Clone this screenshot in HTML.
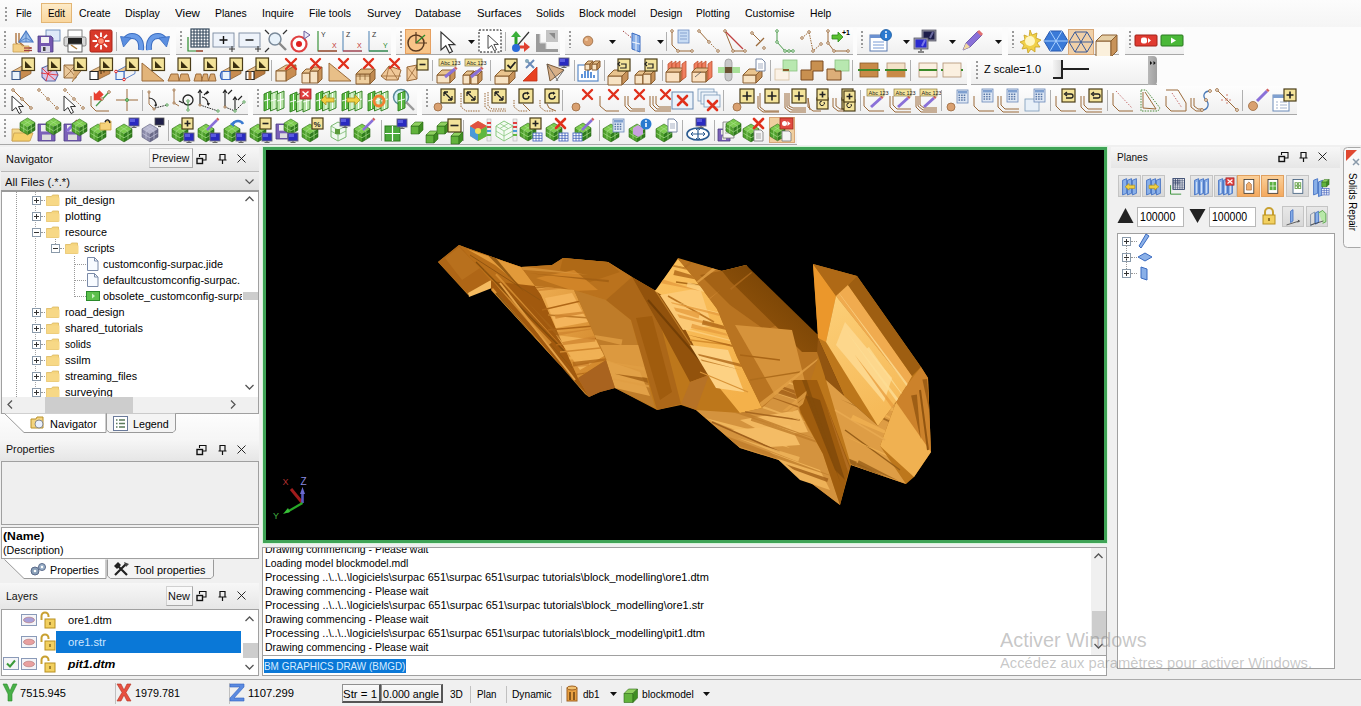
<!DOCTYPE html><html><head><meta charset="utf-8"><style>
*{margin:0;padding:0;box-sizing:border-box}
html,body{width:1361px;height:706px;overflow:hidden;background:#fcfcfc;font-family:"Liberation Sans",sans-serif;font-size:11px;color:#000}
.a{position:absolute}
.t{position:absolute;white-space:nowrap;line-height:14px}
.tb{position:absolute;background:linear-gradient(#fdfdfd,#f1f1f1);border-bottom:1px solid #a9a9a9}
.grip{position:absolute;width:2px;background:repeating-linear-gradient(#9a9a9a 0 2px,transparent 2px 4px)}
.sep{position:absolute;width:1px;background:#b8b8b8}
.hdr{position:absolute;background:linear-gradient(#fafafa,#e9e9e9)}
.box{position:absolute;border:1px solid #a0a0a0;background:#fff}
svg{position:absolute;overflow:visible}
</style></head><body>
<div class="a" style="left:0px;top:0px;width:1361px;height:27px;background:linear-gradient(#fcfcfc,#f5f5f5)"></div>
<div class="grip" style="left:5px;top:7px;height:14px"></div>
<div class="a" style="left:41px;top:3px;width:31px;height:20px;background:linear-gradient(#fdebc8,#f9d69e);border:1px solid #e3b675"></div>
<div class="t" style="left:16px;top:6px;font-size:11.5px;transform:scaleX(0.8472);transform-origin:0 0">File</div>
<div class="t" style="left:48px;top:6px;font-size:11.5px;transform:scaleX(0.8579);transform-origin:0 0">Edit</div>
<div class="t" style="left:79px;top:6px;font-size:11.5px;transform:scaleX(0.9126);transform-origin:0 0">Create</div>
<div class="t" style="left:125px;top:6px;font-size:11.5px;transform:scaleX(0.9255);transform-origin:0 0">Display</div>
<div class="t" style="left:175px;top:6px;font-size:11.5px;transform:scaleX(1.0113);transform-origin:0 0">View</div>
<div class="t" style="left:215px;top:6px;font-size:11.5px;transform:scaleX(0.9043);transform-origin:0 0">Planes</div>
<div class="t" style="left:262px;top:6px;font-size:11.5px;transform:scaleX(0.9043);transform-origin:0 0">Inquire</div>
<div class="t" style="left:309px;top:6px;font-size:11.5px;transform:scaleX(0.9127);transform-origin:0 0">File tools</div>
<div class="t" style="left:367px;top:6px;font-size:11.5px;transform:scaleX(0.9499);transform-origin:0 0">Survey</div>
<div class="t" style="left:415px;top:6px;font-size:11.5px;transform:scaleX(0.9344);transform-origin:0 0">Database</div>
<div class="t" style="left:476.5px;top:6px;font-size:11.5px;transform:scaleX(0.9827);transform-origin:0 0">Surfaces</div>
<div class="t" style="left:535.6px;top:6px;font-size:11.5px;transform:scaleX(0.9067);transform-origin:0 0">Solids</div>
<div class="t" style="left:578.5px;top:6px;font-size:11.5px;transform:scaleX(0.9068);transform-origin:0 0">Block model</div>
<div class="t" style="left:649.5px;top:6px;font-size:11.5px;transform:scaleX(0.9051);transform-origin:0 0">Design</div>
<div class="t" style="left:696px;top:6px;font-size:11.5px;transform:scaleX(0.8812);transform-origin:0 0">Plotting</div>
<div class="t" style="left:745px;top:6px;font-size:11.5px;transform:scaleX(0.9149);transform-origin:0 0">Customise</div>
<div class="t" style="left:810px;top:6px;font-size:11.5px;transform:scaleX(0.9005);transform-origin:0 0">Help</div>
<svg width="0" height="0" style="position:absolute"><defs><linearGradient id="g_hl" x1="0" y1="0" x2="0" y2="1"><stop offset="0" stop-color="#fcdcb0"/><stop offset="1" stop-color="#f6b86c"/></linearGradient></defs></svg>
<div class="a" style="left:0px;top:28px;width:170px;height:27px;background:linear-gradient(#fefefe,#f0f0f0);border-bottom:1px solid #a8a8a8"></div>
<div class="grip" style="left:4px;top:31px;height:17px"></div>
<div class="a" style="left:176px;top:28px;width:215px;height:27px;background:linear-gradient(#fefefe,#f0f0f0);border-bottom:1px solid #a8a8a8"></div>
<div class="grip" style="left:180px;top:31px;height:17px"></div>
<div class="a" style="left:396px;top:28px;width:164px;height:27px;background:linear-gradient(#fefefe,#f0f0f0);border-bottom:1px solid #a8a8a8"></div>
<div class="grip" style="left:400px;top:31px;height:17px"></div>
<div class="a" style="left:565px;top:28px;width:288px;height:27px;background:linear-gradient(#fefefe,#f0f0f0);border-bottom:1px solid #a8a8a8"></div>
<div class="grip" style="left:569px;top:31px;height:17px"></div>
<div class="a" style="left:857px;top:28px;width:145px;height:27px;background:linear-gradient(#fefefe,#f0f0f0);border-bottom:1px solid #a8a8a8"></div>
<div class="grip" style="left:861px;top:31px;height:17px"></div>
<div class="a" style="left:1008px;top:28px;width:111px;height:27px;background:linear-gradient(#fefefe,#f0f0f0);border-bottom:1px solid #a8a8a8"></div>
<div class="grip" style="left:1012px;top:31px;height:17px"></div>
<div class="a" style="left:1125px;top:28px;width:59px;height:27px;background:linear-gradient(#fefefe,#f0f0f0);border-bottom:1px solid #a8a8a8"></div>
<div class="grip" style="left:1129px;top:31px;height:17px"></div>
<svg style="left:11px;top:29px" width="24" height="24" viewBox="0 0 24 24"><path d="M5 4 L5 14 L11 19 L20 19" fill="none" stroke="#a86a30" stroke-width="1.3"/><path d="M8 4 L8 13 L13 17" fill="none" stroke="#a86a30" stroke-width="1.3"/><path d="M2 15h7l2 2h7v6H2z" fill="#f3cf86" stroke="#c8a050" stroke-width=".8"/><path d="M15 2l7 11h-14z" fill="#9cc0ec" stroke="#4a7ac4" stroke-width="1.2"/><path d="M15 2v11M8 13l7-4l7 4" stroke="#4a7ac4" stroke-width=".8" fill="none"/><path d="M13 19 L21 19" fill="none" stroke="#a04040" stroke-width="1.3"/><path d="M13 21.5 L21 21.5" fill="none" stroke="#a04040" stroke-width="1.3"/></svg>
<svg style="left:37px;top:29px" width="24" height="24" viewBox="0 0 24 24"><rect x="9" y="1" width="14" height="11" fill="#dfeaf8" stroke="#6a8ab8" stroke-width=".9"/><path d="M1 7h13l2 2v14H1z" fill="#7458b0" stroke="#4a3a80" stroke-width=".8"/><rect x="4" y="8" width="8" height="6" fill="#f2f2f2"/><rect x="4" y="17" width="9" height="6" fill="#d8d8e8"/><rect x="6" y="18" width="2.5" height="4" fill="#444"/></svg>
<svg style="left:63px;top:29px" width="24" height="24" viewBox="0 0 24 24"><rect x="5" y="1" width="14" height="8" fill="#fff" stroke="#777" stroke-width=".9"/><rect x="1" y="8" width="22" height="9" rx="1.5" fill="#d8d8d8" stroke="#777" stroke-width=".9"/><rect x="5" y="9" width="14" height="7" fill="#222"/><rect x="5" y="15" width="14" height="8" fill="#fff" stroke="#555" stroke-width=".9"/><path d="M8 16l6 4" stroke="#b08040" stroke-width="1.5"/></svg>
<svg style="left:89px;top:29px" width="24" height="24" viewBox="0 0 24 24"><rect x="1" y="1" width="22" height="22" rx="1.5" fill="#d8392a" stroke="#a82418"/><circle cx="12" cy="12" r="2.8" fill="#ff8a70"/><path d="M16.0 12.0L20.5 12.0" stroke="#fff" stroke-width="1.8"/><path d="M14.829553076668798 14.827300724421464L18.0128002879212 18.00801403939561" stroke="#fff" stroke-width="1.8"/><path d="M12.003185306842933 15.999998731727338L12.006768777041232 20.499997304920594" stroke="#fff" stroke-width="1.8"/><path d="M9.17495342071998 14.83180363459373L5.996776019029956 18.017582723511673" stroke="#fff" stroke-width="1.8"/><path d="M8.000005073089842 12.006370611665947L3.5000107803159146 12.013537549790138" stroke="#fff" stroke-width="1.8"/><path d="M9.165947603230908 9.177209357326094L5.977638656865682 6.001569884317948" stroke="#fff" stroke-width="1.8"/><path d="M11.990444087550873 8.000011414449128L11.979693686045607 3.500024255704398" stroke="#fff" stroke-width="1.8"/><path d="M14.820532916033692 9.163700638231132L17.993632446571596 5.972863856241157" stroke="#fff" stroke-width="1.8"/></svg>
<svg style="left:120px;top:29px" width="24" height="24" viewBox="0 0 24 24"><path d="M21 21c1-9-3-14-9-14c-3 0-5 1.5-6.5 3.5" stroke="#3a6cc0" stroke-width="6" fill="none"/><path d="M21 21c1-9-3-14-9-14c-3 0-5 1.5-6.5 3.5" stroke="#6a9ce8" stroke-width="4" fill="none"/><path d="M0.5 7.5l10.5 1.5l-7.5 9z" fill="#5a8ee0" stroke="#3a6cc0" stroke-width=".8"/></svg>
<svg style="left:146px;top:29px" width="24" height="24" viewBox="0 0 24 24"><g transform="translate(24 0) scale(-1 1)"><path d="M21 21c1-9-3-14-9-14c-3 0-5 1.5-6.5 3.5" stroke="#3a6cc0" stroke-width="6" fill="none"/><path d="M21 21c1-9-3-14-9-14c-3 0-5 1.5-6.5 3.5" stroke="#6a9ce8" stroke-width="4" fill="none"/><path d="M0.5 7.5l10.5 1.5l-7.5 9z" fill="#5a8ee0" stroke="#3a6cc0" stroke-width=".8"/></g></svg>
<svg style="left:186px;top:29px" width="24" height="24" viewBox="0 0 24 24"><rect x="5" y="0" width="18" height="18" fill="#fff" stroke="#34485c" stroke-width="1.2"/><path d="M8 0v18M5 3h18" stroke="#34485c" stroke-width="1.1"/><path d="M11 0v18M5 6h18" stroke="#34485c" stroke-width="1.1"/><path d="M14 0v18M5 9h18" stroke="#34485c" stroke-width="1.1"/><path d="M17 0v18M5 12h18" stroke="#34485c" stroke-width="1.1"/><path d="M20 0v18M5 15h18" stroke="#34485c" stroke-width="1.1"/><path d="M2 8 L2 22 L17 22" fill="none" stroke="#2a8a2a" stroke-width="1.2"/><path d="M10 22 L17 22" fill="none" stroke="#c03030" stroke-width="1.2"/></svg>
<svg style="left:212px;top:29px" width="24" height="24" viewBox="0 0 24 24"><rect x="1" y="4" width="21" height="14" fill="#eef3fa" stroke="#7a8aa0" stroke-width=".9"/><path d="M11.5 7v8M7.5 11h8" stroke="#111" stroke-width="1.4"/><path d="M20 17v6M17 20h6" stroke="#333" stroke-width="1"/></svg>
<svg style="left:238px;top:29px" width="24" height="24" viewBox="0 0 24 24"><rect x="1" y="4" width="21" height="14" fill="#eef3fa" stroke="#7a8aa0" stroke-width=".9"/><path d="M7.5 11h8" stroke="#111" stroke-width="1.4"/><path d="M20 17v6M17 20h6" stroke="#333" stroke-width="1"/></svg>
<svg style="left:264px;top:29px" width="24" height="24" viewBox="0 0 24 24"><circle cx="11" cy="10" r="6" fill="#e8f2fa" stroke="#7a8a9a" stroke-width="1.5"/><path d="M15 14l7 7" stroke="#888" stroke-width="2.4"/><path d="M1 1l4 4M23 1l-4 4M1 23l4-4" stroke="#333" stroke-width="1.2"/></svg>
<svg style="left:289px;top:29px" width="24" height="24" viewBox="0 0 24 24"><circle cx="10" cy="15" r="7.5" fill="#fff" stroke="#e04040" stroke-width="2.2"/><circle cx="10" cy="15" r="3" fill="#e02020"/><path d="M15 2l6 4l-6 4z" fill="#e8e8f8" stroke="#6a5a9a" stroke-width="1"/></svg>
<svg style="left:315px;top:29px" width="24" height="24" viewBox="0 0 24 24"><path d="M3 2 L3 22 L22 22" fill="none" stroke="#2a8a2a" stroke-width="1.1"/><text x="6" y="8" font-size="7" fill="#333" font-family="Liberation Sans">Y</text><text x="17" y="19" font-size="7" fill="#c03030" font-family="Liberation Sans">X</text><path d="M3 22 L22 22" fill="none" stroke="#c03030" stroke-width="1.1"/></svg>
<svg style="left:340px;top:29px" width="24" height="24" viewBox="0 0 24 24"><path d="M3 2 L3 22 L22 22" fill="none" stroke="#5a8ab8" stroke-width="1.1"/><text x="6" y="8" font-size="7" fill="#333" font-family="Liberation Sans">Z</text><text x="17" y="19" font-size="7" fill="#c03030" font-family="Liberation Sans">X</text><path d="M3 22 L22 22" fill="none" stroke="#c03030" stroke-width="1.1"/></svg>
<svg style="left:366px;top:29px" width="24" height="24" viewBox="0 0 24 24"><path d="M3 2 L3 22 L22 22" fill="none" stroke="#5a8ab8" stroke-width="1.1"/><text x="6" y="8" font-size="7" fill="#333" font-family="Liberation Sans">Z</text><text x="17" y="19" font-size="7" fill="#2a8a2a" font-family="Liberation Sans">Y</text><path d="M3 22 L22 22" fill="none" stroke="#2a8a2a" stroke-width="1.1"/></svg>
<svg style="left:437px;top:29px" width="24" height="24" viewBox="0 0 24 24"><path transform="translate(4 3) scale(1.2)" d="M0 0v15l4 -3.5l3 6l2.5 -1.2l-3 -5.8h5z" fill="#fff" stroke="#333" stroke-width="1"/></svg>
<svg style="left:478px;top:29px" width="24" height="24" viewBox="0 0 24 24"><rect x="1" y="1" width="22" height="22" fill="#fff" stroke="#111" stroke-dasharray="2 1.5"/><path transform="translate(10 6) scale(0.9)" d="M0 0v15l4 -3.5l3 6l2.5 -1.2l-3 -5.8h5z" fill="#fff" stroke="#333" stroke-width="1"/></svg>
<svg style="left:508px;top:29px" width="24" height="24" viewBox="0 0 24 24"><path d="M8 20V5" stroke="#2aa02a" stroke-width="3"/><path d="M3 8l5-6l5 6z" fill="#3ab03a"/><path d="M9 18h9" stroke="#e04030" stroke-width="3"/><path d="M16 13l6 5l-6 5z" fill="#e04030"/><path d="M9 17l12-14" stroke="#333" stroke-width="1.2"/><circle cx="8" cy="19" r="4" fill="#2a6ad8"/></svg>
<svg style="left:535px;top:29px" width="24" height="24" viewBox="0 0 24 24"><rect x="11" y="1" width="12" height="12" fill="#c4c4c4"/><path d="M14 4h6v6z" fill="#8a8a8a"/><path d="M1 5h4v9h6v6h12v3H1z" fill="#9a9a9a"/><path d="M5 5v9h6v6" fill="none" stroke="#cfcfcf" stroke-width="1"/></svg>
<svg style="left:578px;top:29px" width="24" height="24" viewBox="0 0 24 24"><circle cx="10" cy="12" r="4.8" fill="#d9a070" stroke="#9a6a40" stroke-width=".8"/><circle cx="8.5" cy="10.5" r="1.5" fill="#f0c8a0"/></svg>
<svg style="left:622px;top:29px" width="24" height="24" viewBox="0 0 24 24"><path d="M1 2l10 8" stroke="#a04040" stroke-dasharray="1.5 1.5" stroke-width="1"/><path d="M10 4l8 3v16l-8-3z" fill="#8ab0e8" stroke="#3a6ac0" stroke-width="1"/><path d="M14 6v16M10 13l8 2" stroke="#fff" stroke-width=".9"/></svg>
<svg style="left:670px;top:29px" width="24" height="24" viewBox="0 0 24 24"><path d="M2 2 L2 16 L8 22 L22 22" fill="none" stroke="#9b6a3a" stroke-width="1.0"/><circle cx="2" cy="2" r="1.3" fill="#fff" stroke="#9b6a3a" stroke-width=".9"/><circle cx="8" cy="22" r="1.3" fill="#fff" stroke="#9b6a3a" stroke-width=".9"/><circle cx="22" cy="22" r="1.3" fill="#fff" stroke="#9b6a3a" stroke-width=".9"/><rect x="8" y="1" width="11" height="13" fill="#c8dcf4" stroke="#6a8ac0" stroke-width=".8"/><path d="M10 4h7M10 7h7M10 10h7" stroke="#6a8ac0" stroke-width=".7"/></svg>
<svg style="left:697px;top:29px" width="24" height="24" viewBox="0 0 24 24"><path d="M2 2 L12 13" fill="none" stroke="#9b6a3a" stroke-width="1.0"/><path d="M12 13 L21 22" fill="none" stroke="#9b6a3a" stroke-width="1" stroke-dasharray="1.5 1.5"/><circle cx="2" cy="2" r="1.3" fill="#fff" stroke="#9b6a3a" stroke-width=".9"/><circle cx="12" cy="13" r="1.3" fill="#fff" stroke="#9b6a3a" stroke-width=".9"/><circle cx="21" cy="22" r="1.3" fill="#fff" stroke="#9b6a3a" stroke-width=".9"/></svg>
<svg style="left:723px;top:29px" width="24" height="24" viewBox="0 0 24 24"><path d="M2 2 L10 22 L22 22" fill="none" stroke="#9b6a3a" stroke-width="1.0"/><path d="M2 2 L20 20" fill="none" stroke="#c04040" stroke-width="1.2"/><circle cx="2" cy="2" r="1.3" fill="#fff" stroke="#9b6a3a" stroke-width=".9"/><circle cx="10" cy="22" r="1.3" fill="#fff" stroke="#9b6a3a" stroke-width=".9"/><circle cx="22" cy="22" r="1.3" fill="#fff" stroke="#9b6a3a" stroke-width=".9"/></svg>
<svg style="left:750px;top:29px" width="24" height="24" viewBox="0 0 24 24"><path d="M2 4 L10 12" fill="none" stroke="#9b6a3a" stroke-width="1.0"/><path d="M6 17 L14 9" fill="none" stroke="#9b6a3a" stroke-width="1.3"/><circle cx="2" cy="4" r="1.3" fill="#fff" stroke="#9b6a3a" stroke-width=".9"/><circle cx="14" cy="19" r="1.3" fill="#fff" stroke="#9b6a3a" stroke-width=".9"/></svg>
<svg style="left:773px;top:29px" width="24" height="24" viewBox="0 0 24 24"><path d="M4 2 L4 13 L12 22 L20 22" fill="none" stroke="#4a9a4a" stroke-width="1.0"/><circle cx="4" cy="2" r="1.3" fill="#fff" stroke="#4a9a4a" stroke-width=".9"/><circle cx="4" cy="13" r="1.3" fill="#fff" stroke="#4a9a4a" stroke-width=".9"/><circle cx="12" cy="22" r="1.3" fill="#fff" stroke="#4a9a4a" stroke-width=".9"/><circle cx="16" cy="22" r="1.3" fill="#fff" stroke="#4a9a4a" stroke-width=".9"/><circle cx="20" cy="22" r="1.3" fill="#fff" stroke="#4a9a4a" stroke-width=".9"/></svg>
<svg style="left:800px;top:29px" width="24" height="24" viewBox="0 0 24 24"><path d="M2 9 L9 3 L13 22 L21 15" fill="none" stroke="#9b6a3a" stroke-width="1" stroke-dasharray="1.5 1"/><circle cx="2" cy="9" r="1.3" fill="#fff" stroke="#9b6a3a" stroke-width=".9"/><circle cx="9" cy="3" r="1.3" fill="#fff" stroke="#9b6a3a" stroke-width=".9"/><circle cx="13" cy="22" r="1.3" fill="#fff" stroke="#9b6a3a" stroke-width=".9"/><circle cx="21" cy="15" r="1.3" fill="#fff" stroke="#9b6a3a" stroke-width=".9"/></svg>
<svg style="left:826px;top:29px" width="24" height="24" viewBox="0 0 24 24"><path d="M2 2 L2 14 L8 22 L22 22" fill="none" stroke="#9b6a3a" stroke-width="1.0"/><circle cx="2" cy="2" r="1.3" fill="#fff" stroke="#9b6a3a" stroke-width=".9"/><circle cx="2" cy="14" r="1.3" fill="#fff" stroke="#9b6a3a" stroke-width=".9"/><circle cx="8" cy="22" r="1.3" fill="#fff" stroke="#9b6a3a" stroke-width=".9"/><circle cx="22" cy="22" r="1.3" fill="#fff" stroke="#9b6a3a" stroke-width=".9"/><path d="M6 6h6v-3l5 5l-5 5v-3H6z" fill="#5ac030" stroke="#2a8a1a" stroke-width=".8"/><text x="16" y="6" font-size="7" font-weight="bold" font-family="Liberation Sans">+1</text></svg>
<svg style="left:868px;top:29px" width="24" height="24" viewBox="0 0 24 24"><rect x="2" y="6" width="17" height="16" fill="#fff" stroke="#5a7ab0" stroke-width="1"/><rect x="2" y="6" width="17" height="3" fill="#6a90d0"/><path d="M5 13h11M5 16h11M5 19h11" stroke="#6a90d0" stroke-width=".9"/><circle cx="18" cy="6" r="5.5" fill="#2a7ad0" stroke="#1a5aa0" stroke-width=".8"/><path d="M18 5v4" stroke="#fff" stroke-width="1.6"/><circle cx="18" cy="3" r=".9" fill="#fff"/></svg>
<svg style="left:913px;top:29px" width="24" height="24" viewBox="0 0 24 24"><rect x="9" y="1" width="14" height="11" fill="#8a8a9a" stroke="#5a5a6a" stroke-width=".8"/><rect x="10.5" y="2.5" width="11" height="8" fill="#1e1e4a"/><path d="M20 3l-3 6" stroke="#6a6aa0" stroke-width="2"/><rect x="1" y="9" width="14" height="11" fill="#9a9aaa" stroke="#5a5a6a" stroke-width=".8"/><rect x="2.5" y="10.5" width="11" height="8" fill="#2a2ad0"/><path d="M12 11l-3 6" stroke="#7a7ae8" stroke-width="2"/><path d="M8 20v2M5 23h6" stroke="#666" stroke-width="1.5"/></svg>
<svg style="left:960px;top:29px" width="24" height="24" viewBox="0 0 24 24"><path d="M3 21l3-7l12-12l4 4l-12 12z" fill="#8a70d8" stroke="#5a48a0" stroke-width=".8"/><path d="M18 2l4 4" stroke="#e07070" stroke-width="3"/><path d="M3 21l3-7l4 4z" fill="#f0d8a0"/></svg>
<svg style="left:1018px;top:29px" width="24" height="24" viewBox="0 0 24 24"><path d="M12 1l2 5l5-2l-1 5l5 2l-4 3l3 4l-5 0l0 5l-4-3l-3 4l-1-5l-5 1l2-4l-4-3l5-2l-1-5l5 2z" fill="#f0d048" stroke="#c8a020" stroke-width=".8"/><circle cx="12" cy="12" r="5" fill="#fff6c0"/></svg>
<svg style="left:1044px;top:29px" width="24" height="24" viewBox="0 0 24 24"><path d="M6 2h12l6 10l-6 10H6L0 12z" fill="#3a7ad8" stroke="#2a5ab0" stroke-width="1"/><path d="M6 2l12 20M18 2L6 22M0 12h24" stroke="#a8d0ff" stroke-width="1"/></svg>
<svg style="left:1095px;top:29px" width="24" height="24" viewBox="0 0 24 24"><path d="M1 12h15v16h-15z" fill="#fbf0dc" stroke="#8a5f30" stroke-width="1"/><path d="M1 12l6 -6h15l-6 6z" fill="#e6cfa6" stroke="#8a5f30" stroke-width="1"/><path d="M16 12l6 -6v16l-6 6z" fill="#c8935a" stroke="#8a5f30" stroke-width="1"/></svg>
<svg style="left:1134px;top:29px" width="24" height="24" viewBox="0 0 24 24"><rect x="1" y="6" width="22" height="11" rx="1" fill="#e03a30" stroke="#a02018"/><rect x="7" y="8.5" width="6" height="6" rx="2" fill="#fff"/><path d="M14 9l3 2.5l-3 2.5z" fill="#fff"/></svg>
<svg style="left:1160px;top:29px" width="24" height="24" viewBox="0 0 24 24"><rect x="1" y="6" width="22" height="11" rx="1" fill="#4ab838" stroke="#2a7a20"/><path d="M11 8.5l5 3l-5 3z" fill="#fff"/></svg>
<svg style="left:405px;top:29px" width="26" height="25" viewBox="0 0 26 25"><rect x=".5" y=".5" width="25" height="24" fill="#f8c488" stroke="#e6a060"/><circle cx="11" cy="14" r="8" fill="none" stroke="#5a3a20" stroke-width="1.5"/><path d="M11 3v11h11" stroke="#5a3a20" stroke-width="1.2" fill="none"/><path d="M11 14l9-8" stroke="#2a8a2a" stroke-width="1.4"/></svg>
<svg style="left:1068px;top:29px" width="26" height="26" viewBox="0 0 26 26"><rect x=".5" y=".5" width="25" height="25" fill="#f0d0a8" stroke="#d8a878"/><g transform="translate(1 1)"><path d="M6 2h12l6 10l-6 10H6L0 12z" fill="none" stroke="#3a5a98" stroke-width="1"/><path d="M6 2l12 20M18 2L6 22M0 12h24" stroke="#3a5a98" stroke-width="1"/></g></svg>
<svg style="left:468px;top:40px" width="8" height="5" viewBox="0 0 8 5"><path d="M0 0h7l-3.5 4z" fill="#111"/></svg>
<svg style="left:609px;top:40px" width="8" height="5" viewBox="0 0 8 5"><path d="M0 0h7l-3.5 4z" fill="#111"/></svg>
<svg style="left:657px;top:40px" width="8" height="5" viewBox="0 0 8 5"><path d="M0 0h7l-3.5 4z" fill="#111"/></svg>
<svg style="left:903px;top:40px" width="8" height="5" viewBox="0 0 8 5"><path d="M0 0h7l-3.5 4z" fill="#111"/></svg>
<svg style="left:949px;top:40px" width="8" height="5" viewBox="0 0 8 5"><path d="M0 0h7l-3.5 4z" fill="#111"/></svg>
<svg style="left:995px;top:40px" width="8" height="5" viewBox="0 0 8 5"><path d="M0 0h7l-3.5 4z" fill="#111"/></svg>
<div class="a" style="left:116px;top:32px;width:1px;height:19px;background:#b0b0b0"></div>
<div class="a" style="left:505px;top:32px;width:1px;height:19px;background:#b0b0b0"></div>
<div class="a" style="left:666px;top:32px;width:1px;height:19px;background:#b0b0b0"></div>
<div class="a" style="left:0px;top:56px;width:967px;height:29px;background:linear-gradient(#fefefe,#f0f0f0);border-bottom:1px solid #a8a8a8"></div>
<div class="grip" style="left:4px;top:59px;height:19px"></div>
<svg style="left:11px;top:58px" width="24" height="24" viewBox="0 0 24 24"><path d="M1 13.5l11 -6h8l-11 6z" fill="#e6c08c" stroke="#8a5f30" stroke-width=".8"/><path d="M9 13.5l11 -6v8l-11 6z" fill="#c88c50" stroke="#8a5f30" stroke-width=".8"/><path d="M1 13.5h8v8h-8z" fill="#eaf4fc" stroke="#3a5a8a" stroke-width="1.1"/><rect x="11" y="0" width="12.5" height="12.5" fill="#f3e39a" stroke="#4a3c18" stroke-width="1.2"/><path d="M14 3l7 7h-7z" fill="#3a3010"/></svg>
<svg style="left:37px;top:58px" width="24" height="24" viewBox="0 0 24 24"><path d="M5 10l7-3l6 3l3 7l-3 6h-9l-4-4z" fill="#d8c8e8" stroke="#5a6aa8" stroke-width="1.1"/><path d="M11 16L5 10M11 16l1-9M11 16l7-6M11 16l10 1M11 16l7 6M11 16l-2 7M11 16l-7-1" stroke="#e82020" stroke-width=".8"/><rect x="11" y="0" width="12.5" height="12.5" fill="#f3e39a" stroke="#4a3c18" stroke-width="1.2"/><path d="M14 3l7 7h-7z" fill="#3a3010"/></svg>
<svg style="left:63px;top:58px" width="24" height="24" viewBox="0 0 24 24"><path d="M1 7h12v13H1z" fill="#eac89a" stroke="#8a5f30" stroke-width=".9"/><path d="M1 7l7 6M13 7l-6 6M1 20l7-7M13 20l-5-7" stroke="#8a5f30" stroke-width=".7"/><path d="M13 7l8 2l-12 15" fill="#d8aa70" stroke="#8a5f30" stroke-width=".8"/><rect x="11" y="0" width="12.5" height="12.5" fill="#f3e39a" stroke="#4a3c18" stroke-width="1.2"/><path d="M14 3l7 7h-7z" fill="#3a3010"/></svg>
<svg style="left:89px;top:58px" width="24" height="24" viewBox="0 0 24 24"><path d="M1 13.5l12 -6h8l-12 6z" fill="#e6c08c" stroke="#8a5f30" stroke-width=".8"/><path d="M9 13.5l12 -6v8l-12 6z" fill="#c88c50" stroke="#8a5f30" stroke-width=".8"/><path d="M1 13.5h8v8h-8z" fill="#fff" stroke="#222" stroke-width="1.1"/><path d="M12 9v7M15 7.5v7M18 6v7" stroke="#5a3a18" stroke-width="1.2"/><rect x="11" y="0" width="12.5" height="12.5" fill="#f3e39a" stroke="#4a3c18" stroke-width="1.2"/><path d="M14 3l7 7h-7z" fill="#3a3010"/></svg>
<svg style="left:115px;top:58px" width="24" height="24" viewBox="0 0 24 24"><path d="M1 13.5l11 -6h8l-11 6z" fill="#e6c08c" stroke="#3a6ac0" stroke-width=".8"/><path d="M9 13.5l11 -6v8l-11 6z" fill="#f4f4f4" stroke="#3a6ac0" stroke-width=".8"/><path d="M1 13.5h8v8h-8z" fill="#eaf4fc" stroke="#3a6ac0" stroke-width="1.1"/><circle cx="1" cy="13.5" r="1.3" fill="#fff" stroke="#e02020"/><circle cx="9" cy="21.5" r="1.3" fill="#fff" stroke="#e02020"/><rect x="11" y="0" width="12.5" height="12.5" fill="#f3e39a" stroke="#4a3c18" stroke-width="1.2"/><path d="M14 3l7 7h-7z" fill="#3a3010"/></svg>
<svg style="left:141px;top:58px" width="24" height="24" viewBox="0 0 24 24"><path d="M1 23V5l22 18z" fill="#e2b47a" stroke="#9a6a3a" stroke-width="1"/><rect x="11" y="0" width="12.5" height="12.5" fill="#f3e39a" stroke="#4a3c18" stroke-width="1.2"/><path d="M14 3l7 7h-7z" fill="#3a3010"/></svg>
<svg style="left:167px;top:58px" width="24" height="24" viewBox="0 0 24 24"><path d="M1 23l3-7h7l1 7zM12 23l2-7h7l2 7z" fill="#dcaa70" stroke="#9a6a3a" stroke-width="1"/><rect x="11" y="0" width="12.5" height="12.5" fill="#f3e39a" stroke="#4a3c18" stroke-width="1.2"/><path d="M14 3l7 7h-7z" fill="#3a3010"/></svg>
<svg style="left:193px;top:58px" width="24" height="24" viewBox="0 0 24 24"><path d="M1 23l2-7h5l1 7zM8.5 23l2-7h4l1 7zM15.5 23l2-7h4l1.5 7z" fill="#dcaa70" stroke="#9a6a3a" stroke-width="1"/><rect x="11" y="0" width="12.5" height="12.5" fill="#f3e39a" stroke="#4a3c18" stroke-width="1.2"/><path d="M14 3l7 7h-7z" fill="#3a3010"/></svg>
<svg style="left:219px;top:58px" width="24" height="24" viewBox="0 0 24 24"><path d="M3 13.5l11 -6h8l-11 6z" fill="#e6c08c" stroke="#8a5f30" stroke-width=".8"/><path d="M11 13.5l11 -6v8l-11 6z" fill="#c88c50" stroke="#8a5f30" stroke-width=".8"/><path d="M3 13.5h8v8h-8z" fill="#eaf4fc" stroke="#3a6ac0" stroke-width="1.1"/><path d="M3 13.5a4 5 0 0 0 0 8" fill="none" stroke="#3a6ac0" stroke-width="1.3"/><rect x="11" y="0" width="12.5" height="12.5" fill="#f3e39a" stroke="#4a3c18" stroke-width="1.2"/><path d="M14 3l7 7h-7z" fill="#3a3010"/></svg>
<svg style="left:245px;top:58px" width="24" height="24" viewBox="0 0 24 24"><path d="M1 13.5l11 -6h8l-11 6z" fill="#e6c08c" stroke="#8a5f30" stroke-width=".8"/><path d="M9 13.5l11 -6v8l-11 6z" fill="#b87a40" stroke="#8a5f30" stroke-width=".8"/><path d="M1 13.5h8v8h-8z" fill="#fff" stroke="#222" stroke-width="1.1"/><path d="M5 13.5v8" stroke="#b87a40" stroke-width="3"/><rect x="11" y="0" width="12.5" height="12.5" fill="#f3e39a" stroke="#4a3c18" stroke-width="1.2"/><path d="M14 3l7 7h-7z" fill="#3a3010"/></svg>
<svg style="left:275px;top:58px" width="24" height="24" viewBox="0 0 24 24"><path d="M1 13l10 -6h10l-10 6z" fill="#e6c08c" stroke="#8a5f30" stroke-width=".8"/><path d="M11 13l10 -6v10l-10 6z" fill="#c88c50" stroke="#8a5f30" stroke-width=".8"/><path d="M1 13h10v10h-10z" fill="#f6e2c4" stroke="#8a5f30" stroke-width="1.1"/><path d="M11 1l10 10M21 1l-10 10" stroke="#e0301c" stroke-width="2.4" stroke-linecap="round"/></svg>
<svg style="left:301px;top:58px" width="24" height="24" viewBox="0 0 24 24"><path d="M1 15h8v10h-8z" fill="#f7e3c4" stroke="#8a5f30" stroke-width="1"/><path d="M1 15l4 -4h8l-4 4z" fill="#e9c48e" stroke="#8a5f30" stroke-width="1"/><path d="M9 15l4 -4v10l-4 4z" fill="#c8935a" stroke="#8a5f30" stroke-width="1"/><path d="M9 13h8v12h-8z" fill="#f7e3c4" stroke="#8a5f30" stroke-width="1"/><path d="M9 13l4 -4h8l-4 4z" fill="#e9c48e" stroke="#8a5f30" stroke-width="1"/><path d="M17 13l4 -4v12l-4 4z" fill="#c8935a" stroke="#8a5f30" stroke-width="1"/><path d="M10 1l9 9M19 1l-9 9" stroke="#e0301c" stroke-width="2.4" stroke-linecap="round"/></svg>
<svg style="left:328px;top:58px" width="24" height="24" viewBox="0 0 24 24"><path d="M1 23V5l22 18z" fill="#e8bf88" stroke="#9a6a3a" stroke-width="1"/><path d="M11 1l9 9M20 1l-9 9" stroke="#e0301c" stroke-width="2.4" stroke-linecap="round"/></svg>
<svg style="left:354px;top:58px" width="24" height="24" viewBox="0 0 24 24"><path d="M2 16h14v10h-14z" fill="#f0d0a0" stroke="#8a5f30" stroke-width="1"/><path d="M2 16l5 -5h14l-5 5z" fill="#e0b880" stroke="#8a5f30" stroke-width="1"/><path d="M16 16l5 -5v10l-5 5z" fill="#c08a50" stroke="#8a5f30" stroke-width="1"/><path d="M6 16v6M11 16v6M2 18h14" stroke="#8a5f30" stroke-width=".8"/><path d="M10 1l9 9M19 1l-9 9" stroke="#e0301c" stroke-width="2.4" stroke-linecap="round"/></svg>
<svg style="left:380px;top:58px" width="24" height="24" viewBox="0 0 24 24"><path d="M1 18l8-10l12 4l-3 10H6z" fill="#f0c898" stroke="#9a6a3a" stroke-width="1"/><path d="M9 8l-3 14M9 8l9 14M1 18h20" stroke="#9a6a3a" stroke-width=".8"/><path d="M10 1l9 9M19 1l-9 9" stroke="#e0301c" stroke-width="2.4" stroke-linecap="round"/></svg>
<svg style="left:405px;top:58px" width="24" height="24" viewBox="0 0 24 24"><path d="M2 9l10-2v14l-10 2z" fill="#f0c898" stroke="#9a6a3a" stroke-width="1"/><path d="M2 9l10 12M12 7l-10 16" stroke="#9a6a3a" stroke-width=".8"/><rect x="12" y="1" width="11" height="11" fill="#f3e39a" stroke="#4a3c18" stroke-width="1.2"/><path d="M14.5 6.5h6" stroke="#222" stroke-width="1.6"/></svg>
<svg style="left:436px;top:58px" width="24" height="24" viewBox="0 0 24 24"><path d="M1 17h13v8h-13z" fill="#f7e3c4" stroke="#8a5f30" stroke-width="1"/><path d="M1 17l5 -5h13l-5 5z" fill="#e9c48e" stroke="#8a5f30" stroke-width="1"/><path d="M14 17l5 -5v8l-5 5z" fill="#c8935a" stroke="#8a5f30" stroke-width="1"/><path d="M9 19L19 11" stroke="#8a70d8" stroke-width="3" stroke-linecap="butt"/><path d="M19 11l1.5 -1.5" stroke="#d06060" stroke-width="3"/><rect x="3" y="1" width="17" height="7" fill="#f3e39a" stroke="#8a7a40" stroke-width=".7"/><text x="4.5" y="6.8" font-size="5.5" font-family="Liberation Sans" fill="#222">Abc 123</text></svg>
<svg style="left:462px;top:58px" width="24" height="24" viewBox="0 0 24 24"><path d="M1 17h7v9h-7z" fill="#f7e3c4" stroke="#8a5f30" stroke-width="1"/><path d="M1 17l4 -4h7l-4 4z" fill="#e9c48e" stroke="#8a5f30" stroke-width="1"/><path d="M8 17l4 -4v9l-4 4z" fill="#c8935a" stroke="#8a5f30" stroke-width="1"/><path d="M9 17h7v9h-7z" fill="#f7e3c4" stroke="#8a5f30" stroke-width="1"/><path d="M9 17l4 -4h7l-4 4z" fill="#e9c48e" stroke="#8a5f30" stroke-width="1"/><path d="M16 17l4 -4v9l-4 4z" fill="#c8935a" stroke="#8a5f30" stroke-width="1"/><path d="M9 19L19 11" stroke="#8a70d8" stroke-width="3" stroke-linecap="butt"/><path d="M19 11l1.5 -1.5" stroke="#d06060" stroke-width="3"/><rect x="3" y="1" width="17" height="7" fill="#f3e39a" stroke="#8a7a40" stroke-width=".7"/><text x="4.5" y="6.8" font-size="5.5" font-family="Liberation Sans" fill="#222">Abc 123</text></svg>
<svg style="left:494px;top:58px" width="24" height="24" viewBox="0 0 24 24"><path d="M1 18h14v8h-14z" fill="#f7e3c4" stroke="#8a5f30" stroke-width="1"/><path d="M1 18l6 -6h14l-6 6z" fill="#e9c48e" stroke="#8a5f30" stroke-width="1"/><path d="M15 18l6 -6v8l-6 6z" fill="#c8935a" stroke="#8a5f30" stroke-width="1"/><rect x="11" y="1" width="12" height="12" fill="#f3e39a" stroke="#4a3c18" stroke-width="1.2"/><path d="M13.5 7l3 3l5-6" stroke="#222" stroke-width="1.8" fill="none"/></svg>
<svg style="left:520px;top:58px" width="24" height="24" viewBox="0 0 24 24"><path d="M3 23L17 9v14z" fill="#e84020" stroke="#c03018" stroke-width=".8"/><path d="M6 2l8 8M14 2l-8 8" stroke="#6a8ab8" stroke-width="2"/><circle cx="7" cy="3" r="2" fill="#8ab"/></svg>
<svg style="left:546px;top:58px" width="24" height="24" viewBox="0 0 24 24"><path d="M1 6l17 6l-14 11z" fill="#d8b088" stroke="#7a5a3a" stroke-width="1"/><path d="M1 6l11 17M18 12l-8 11" stroke="#555" stroke-width=".8"/><rect x="13" y="0" width="10" height="8" fill="#2a2ac0" stroke="#6a6a7a" stroke-width=".9"/><rect x="14" y="1" width="5" height="3" fill="#5a5ae0"/><path d="M18 8v1.5M15.5 9.5h5" stroke="#666" stroke-width="1.1"/></svg>
<svg style="left:577px;top:58px" width="24" height="24" viewBox="0 0 24 24"><rect x="1" y="7" width="20" height="16" fill="#fff" stroke="#5a8ac8" stroke-width="1.2"/><path d="M5 20v-4M8 20v-7M11 20v-9M14 20v-6M17 20v-3" stroke="#3a7ad0" stroke-width="1.6"/><path d="M8 6h5v6h-5z" fill="#f7e3c4" stroke="#8a5f30" stroke-width="1"/><path d="M8 6l3 -3h5l-3 3z" fill="#e9c48e" stroke="#8a5f30" stroke-width="1"/><path d="M13 6l3 -3v6l-3 3z" fill="#c8935a" stroke="#8a5f30" stroke-width="1"/><path d="M15 6h5v6h-5z" fill="#f7e3c4" stroke="#8a5f30" stroke-width="1"/><path d="M15 6l3 -3h5l-3 3z" fill="#e9c48e" stroke="#8a5f30" stroke-width="1"/><path d="M20 6l3 -3v6l-3 3z" fill="#c8935a" stroke="#8a5f30" stroke-width="1"/></svg>
<svg style="left:607px;top:58px" width="24" height="24" viewBox="0 0 24 24"><path d="M1 18h14v9h-14z" fill="#f7e3c4" stroke="#8a5f30" stroke-width="1"/><path d="M1 18l6 -6h14l-6 6z" fill="#e9c48e" stroke="#8a5f30" stroke-width="1"/><path d="M15 18l6 -6v9l-6 6z" fill="#c8935a" stroke="#8a5f30" stroke-width="1"/><rect x="11" y="1" width="12" height="12" fill="#f3e39a" stroke="#4a3c18" stroke-width="1.2"/><path d="M14 6h5v4h-6" stroke="#222" stroke-width="1.2" fill="none"/><path d="M13 4l-2 2l2 2" stroke="#222" stroke-width="1.2" fill="none"/></svg>
<svg style="left:634px;top:58px" width="24" height="24" viewBox="0 0 24 24"><path d="M1 17h8v9h-8z" fill="#f7e3c4" stroke="#8a5f30" stroke-width="1"/><path d="M1 17l4 -4h8l-4 4z" fill="#e9c48e" stroke="#8a5f30" stroke-width="1"/><path d="M9 17l4 -4v9l-4 4z" fill="#c8935a" stroke="#8a5f30" stroke-width="1"/><path d="M9 16h8v10h-8z" fill="#f7e3c4" stroke="#8a5f30" stroke-width="1"/><path d="M9 16l4 -4h8l-4 4z" fill="#e9c48e" stroke="#8a5f30" stroke-width="1"/><path d="M17 16l4 -4v10l-4 4z" fill="#c8935a" stroke="#8a5f30" stroke-width="1"/><rect x="11" y="1" width="12" height="12" fill="#f3e39a" stroke="#4a3c18" stroke-width="1.2"/><path d="M14 6h5v4h-6" stroke="#222" stroke-width="1.2" fill="none"/><path d="M13 4l-2 2l2 2" stroke="#222" stroke-width="1.2" fill="none"/></svg>
<svg style="left:665px;top:58px" width="24" height="24" viewBox="0 0 24 24"><path d="M3 6l4-3v16l-4 3z" fill="#f08060" stroke="#c05030" stroke-width=".8"/><path d="M7 6l4-3v16l-4 3z" fill="#f08060" stroke="#c05030" stroke-width=".8"/><path d="M11 6l4-3v16l-4 3z" fill="#f08060" stroke="#c05030" stroke-width=".8"/><path d="M1 14h14v10h-14z" fill="#fae0c0" stroke="#8a5f30" stroke-width="1"/><path d="M1 14l4 -4h14l-4 4z" fill="#e8c090" stroke="#8a5f30" stroke-width="1"/><path d="M15 14l4 -4v10l-4 4z" fill="#c08050" stroke="#8a5f30" stroke-width="1"/><path d="M17 6l4-3v16l-4 3z" fill="#f08060" stroke="#c05030" stroke-width=".8"/></svg>
<svg style="left:691px;top:58px" width="24" height="24" viewBox="0 0 24 24"><path d="M3 6l4-3v16l-4 3z" fill="#f08060" stroke="#c05030" stroke-width=".8"/><path d="M7 6l4-3v16l-4 3z" fill="#f08060" stroke="#c05030" stroke-width=".8"/><path d="M11 6l4-3v16l-4 3z" fill="#f08060" stroke="#c05030" stroke-width=".8"/><path d="M1 14h14v10h-14z" fill="#fae0c0" stroke="#8a5f30" stroke-width="1"/><path d="M1 14l4 -4h14l-4 4z" fill="#e8c090" stroke="#8a5f30" stroke-width="1"/><path d="M15 14l4 -4v10l-4 4z" fill="#c08050" stroke="#8a5f30" stroke-width="1"/><path d="M17 6l4-3v16l-4 3z" fill="#f08060" stroke="#c05030" stroke-width=".8"/><path d="M4 19l6-5" stroke="#555" stroke-width=".8"/></svg>
<svg style="left:717px;top:58px" width="24" height="24" viewBox="0 0 24 24"><rect x="1" y="9" width="22" height="6" fill="#a8e098"/><rect x="8" y="1" width="7" height="22" rx="3.5" fill="#c8c8c8" stroke="#999" stroke-width=".8"/><rect x="8" y="9" width="7" height="6" fill="#6a5030"/></svg>
<svg style="left:742px;top:58px" width="24" height="24" viewBox="0 0 24 24"><path d="M1 17h13v8h-13z" fill="#f7e3c4" stroke="#8a5f30" stroke-width="1"/><path d="M1 17l6 -6h13l-6 6z" fill="#e9c48e" stroke="#8a5f30" stroke-width="1"/><path d="M14 17l6 -6v8l-6 6z" fill="#c8935a" stroke="#8a5f30" stroke-width="1"/><path d="M14 1h6l3 3v9h-9z" fill="#fff" stroke="#6a7a9a" stroke-width=".9"/><path d="M16 6h5M16 8h5M16 10h5" stroke="#6a7a9a" stroke-width=".6"/></svg>
<svg style="left:774px;top:58px" width="24" height="24" viewBox="0 0 24 24"><rect x="1" y="11" width="14" height="11" fill="#fbf2e6" stroke="#d8c0a0" stroke-width=".8"/><rect x="9" y="2" width="14" height="11" fill="#b8e8b0" stroke="#8ac080" stroke-width=".8"/><rect x="9" y="11" width="6" height="2" fill="#8a5a2a"/></svg>
<svg style="left:800px;top:58px" width="24" height="24" viewBox="0 0 24 24"><path d="M1 12h10V3h12v10H13v9H1z" fill="#c89050" stroke="#7a4a20" stroke-width="1"/></svg>
<svg style="left:826px;top:58px" width="24" height="24" viewBox="0 0 24 24"><rect x="9" y="2" width="14" height="11" fill="#b8e8b0" stroke="#8ac080" stroke-width=".8"/><path d="M1 11h8v2h6v9H1z" fill="#dcae78" stroke="#7a4a20" stroke-width="1"/></svg>
<svg style="left:857px;top:58px" width="24" height="24" viewBox="0 0 24 24"><rect x="3" y="5" width="18" height="14" fill="#c88a48" stroke="#8a5a28" stroke-width=".8"/><path d="M1 12h22" stroke="#3a8a2a" stroke-width="2"/></svg>
<svg style="left:884px;top:58px" width="24" height="24" viewBox="0 0 24 24"><rect x="3" y="5" width="18" height="14" fill="#f3e2c8" stroke="#b09070" stroke-width=".8"/><rect x="3" y="12" width="18" height="7" fill="#c88a48"/><path d="M1 12h22" stroke="#3a8a2a" stroke-width="2"/></svg>
<svg style="left:916px;top:58px" width="24" height="24" viewBox="0 0 24 24"><rect x="3" y="5" width="18" height="14" fill="#fbf0e0" stroke="#b09070" stroke-width=".8"/><path d="M3 12h18" stroke="#3a8a2a" stroke-width="2"/></svg>
<svg style="left:940px;top:58px" width="24" height="24" viewBox="0 0 24 24"><rect x="3" y="5" width="18" height="14" fill="#fbf0e0" stroke="#b09070" stroke-width=".8"/><path d="M1 12h2M21 12h2" stroke="#3a8a2a" stroke-width="2"/></svg>
<div class="a" style="left:271px;top:60px;width:1px;height:21px;background:#b0b0b0"></div>
<div class="a" style="left:432px;top:60px;width:1px;height:21px;background:#b0b0b0"></div>
<div class="a" style="left:490px;top:60px;width:1px;height:21px;background:#b0b0b0"></div>
<div class="a" style="left:574px;top:60px;width:1px;height:21px;background:#b0b0b0"></div>
<div class="a" style="left:604px;top:60px;width:1px;height:21px;background:#b0b0b0"></div>
<div class="a" style="left:662px;top:60px;width:1px;height:21px;background:#b0b0b0"></div>
<div class="a" style="left:770px;top:60px;width:1px;height:21px;background:#b0b0b0"></div>
<div class="a" style="left:852px;top:60px;width:1px;height:21px;background:#b0b0b0"></div>
<div class="a" style="left:910px;top:60px;width:1px;height:21px;background:#b0b0b0"></div>
<div class="a" style="left:971px;top:56px;width:186px;height:29px;background:linear-gradient(#fefefe,#f0f0f0);border-bottom:1px solid #a8a8a8"></div>
<div class="grip" style="left:976px;top:61px;height:20px"></div>
<div class="t" style="left:984px;top:62px;font-size:11.5px;transform:scaleX(0.9537);transform-origin:0 0">Z scale=1.0</div>
<div class="a" style="left:1053px;top:60px;width:10px;height:19px;background:linear-gradient(90deg,#f4f4f4,#dcdcdc);border-right:2px solid #222;border-bottom:2px solid #222"></div>
<div class="a" style="left:1063px;top:68px;width:26px;height:2px;background:#222"></div>
<div class="a" style="left:1148px;top:56px;width:9px;height:29px;background:linear-gradient(90deg,#b8b8b8,#a0a0a0);border-radius:0 4px 4px 0"></div>
<svg style="left:1150px;top:61px" width="6" height="4" viewBox="0 0 6 4"><path d="M0 0l2.2 2l-2.2 2zM3.5 0l2.2 2l-2.2 2z" fill="#111"/></svg>
<div class="a" style="left:0px;top:86px;width:248px;height:29px;background:linear-gradient(#fefefe,#f0f0f0);border-bottom:1px solid #a8a8a8"></div>
<div class="grip" style="left:4px;top:89px;height:19px"></div>
<div class="a" style="left:253px;top:86px;width:164px;height:29px;background:linear-gradient(#fefefe,#f0f0f0);border-bottom:1px solid #a8a8a8"></div>
<div class="grip" style="left:257px;top:89px;height:19px"></div>
<div class="a" style="left:422px;top:86px;width:875px;height:29px;background:linear-gradient(#fefefe,#f0f0f0);border-bottom:1px solid #a8a8a8"></div>
<div class="grip" style="left:426px;top:89px;height:19px"></div>
<svg style="left:11px;top:88px" width="24" height="24" viewBox="0 0 24 24"><path d="M2 2 L20 20" fill="none" stroke="#9b6a3a" stroke-width="1.0"/><circle cx="2" cy="2" r="1.3" fill="#fff" stroke="#9b6a3a" stroke-width=".9"/><circle cx="11" cy="11" r="1.3" fill="#fff" stroke="#9b6a3a" stroke-width=".9"/><circle cx="20" cy="20" r="1.3" fill="#fff" stroke="#9b6a3a" stroke-width=".9"/><path transform="translate(1 8) scale(1.0)" d="M0 0v15l4 -3.5l3 6l2.5 -1.2l-3 -5.8h5z" fill="#fff" stroke="#333" stroke-width="1"/></svg>
<svg style="left:37px;top:88px" width="24" height="24" viewBox="0 0 24 24"><path d="M2 2 L20 20" fill="none" stroke="#9b6a3a" stroke-width="1" stroke-dasharray="1.5 1.5"/><circle cx="2" cy="2" r="1.3" fill="#fff" stroke="#9b6a3a" stroke-width=".9"/><circle cx="11" cy="11" r="1.3" fill="#fff" stroke="#9b6a3a" stroke-width=".9"/><circle cx="20" cy="20" r="1.3" fill="#fff" stroke="#9b6a3a" stroke-width=".9"/></svg>
<svg style="left:63px;top:88px" width="24" height="24" viewBox="0 0 24 24"><path d="M2 2 L20 20" fill="none" stroke="#9b6a3a" stroke-width="1" stroke-dasharray="1.5 1.5"/><circle cx="2" cy="2" r="1.3" fill="#fff" stroke="#9b6a3a" stroke-width=".9"/><circle cx="11" cy="11" r="1.3" fill="#fff" stroke="#9b6a3a" stroke-width=".9"/><circle cx="20" cy="20" r="1.3" fill="#fff" stroke="#9b6a3a" stroke-width=".9"/><path transform="translate(1 8) scale(1.0)" d="M0 0v15l4 -3.5l3 6l2.5 -1.2l-3 -5.8h5z" fill="#fff" stroke="#333" stroke-width="1"/></svg>
<svg style="left:89px;top:88px" width="24" height="24" viewBox="0 0 24 24"><path d="M2 8 L2 18 L7 23 L20 23" fill="none" stroke="#9b6a3a" stroke-width="1.0"/><path d="M7 18 L20 4" fill="none" stroke="#4a9a4a" stroke-width="1.3"/><circle cx="13" cy="11" r="1.3" fill="#fff" stroke="#9b6a3a" stroke-width=".9"/><circle cx="20" cy="4" r="1.3" fill="#fff" stroke="#9b6a3a" stroke-width=".9"/><path d="M4 5h5v-3l6 6l-6 6v-3H4z" transform="rotate(135 9 8)" fill="#e84030"/></svg>
<svg style="left:115px;top:88px" width="24" height="24" viewBox="0 0 24 24"><path d="M12 1 L12 23" fill="none" stroke="#9b6a3a" stroke-width="1.0"/><path d="M1 12 L23 12" fill="none" stroke="#9b6a3a" stroke-width="1.0"/><circle cx="12" cy="12" r="1.5" fill="#8c8" stroke="#4a9a4a" stroke-width=".9"/></svg>
<svg style="left:145px;top:88px" width="24" height="24" viewBox="0 0 24 24"><path d="M4 4 L4 16 L9 21" fill="none" stroke="#9b6a3a" stroke-width="0.9"/><path d="M4 10a7 7 0 0 1 7 8" stroke="#222" fill="none" stroke-width="1.2"/><path d="M9 17l2 2l1-3z" fill="#222"/><path d="M10 20 L22 17" fill="none" stroke="#222" stroke-width="1" stroke-dasharray="1.5 1"/><circle cx="4" cy="4" r="1.1" fill="#fff" stroke="#9b6a3a" stroke-width=".9"/><circle cx="9" cy="21" r="1.1" fill="#fff" stroke="#9b6a3a" stroke-width=".9"/><circle cx="22" cy="17" r="1.2" fill="#fff" stroke="#4a9a4a" stroke-width=".9"/></svg>
<svg style="left:171px;top:88px" width="24" height="24" viewBox="0 0 24 24"><path d="M3 2 L3 15 L8 18" fill="none" stroke="#9b6a3a" stroke-width="0.9"/><path d="M8 13l4 2" stroke="#222" stroke-width="1.2"/><circle cx="17" cy="12" r="5" fill="none" stroke="#222" stroke-width="1.3"/><path d="M17 12 L17 22" fill="none" stroke="#4a9a4a" stroke-width="1"/><circle cx="3" cy="2" r="1.1" fill="#fff" stroke="#9b6a3a" stroke-width=".9"/><circle cx="3" cy="15" r="1.1" fill="#fff" stroke="#9b6a3a" stroke-width=".9"/><circle cx="17" cy="13" r="1.2" fill="#fff" stroke="#4a9a4a" stroke-width=".9"/><circle cx="17" cy="22" r="1.2" fill="#fff" stroke="#4a9a4a" stroke-width=".9"/></svg>
<svg style="left:197px;top:88px" width="24" height="24" viewBox="0 0 24 24"><path d="M3 17V2M1 5l2-3l2 3" stroke="#222" stroke-width="1.1" fill="none"/><path d="M7 7l4-4M9 6l3-2" stroke="#222" stroke-width="1.1"/><path d="M5 9a7 7 0 0 1 6 8" stroke="#222" fill="none" stroke-width="1.2"/><path d="M10 15l1.5 3l1.5-3z" fill="#222"/><path d="M3 17 L21 23" fill="none" stroke="#222" stroke-width="1" stroke-dasharray="1.5 1"/><circle cx="3" cy="17" r="1.1" fill="#fff" stroke="#9b6a3a" stroke-width=".9"/><circle cx="21" cy="23" r="1.2" fill="#fff" stroke="#4a9a4a" stroke-width=".9"/></svg>
<svg style="left:222px;top:88px" width="24" height="24" viewBox="0 0 24 24"><path d="M3 19V2M1 5l2-3l2 3M13 23V9M11 12l2-3l2 3" stroke="#222" stroke-width="1.1" fill="none"/><path d="M6 6l4-4M16 12l4-4" stroke="#222" stroke-width="1.1"/><path d="M3 19 L13 23 L22 14" fill="none" stroke="#222" stroke-width="1" stroke-dasharray="1.5 1"/><circle cx="3" cy="19" r="1.1" fill="#fff" stroke="#9b6a3a" stroke-width=".9"/><circle cx="13" cy="23" r="1.2" fill="#fff" stroke="#4a9a4a" stroke-width=".9"/><circle cx="22" cy="14" r="1.2" fill="#fff" stroke="#4a9a4a" stroke-width=".9"/></svg>
<svg style="left:262px;top:88px" width="24" height="24" viewBox="0 0 24 24"><path d="M2.0 6l7 -3v17l-7 3z" fill="#5cb844" stroke="#2a7a1a" stroke-width=".9"/><path d="M5.5 5v16M2.0 13l7 -2" stroke="#fff" stroke-width=".9"/><path d="M8.5 6l7 -3v17l-7 3z" fill="#b8e4a8" stroke="#2a7a1a" stroke-width=".9"/><path d="M12.0 5v16M8.5 13l7 -2" stroke="#fff" stroke-width=".9"/><path d="M15.0 6l7 -3v17l-7 3z" fill="#b8e4a8" stroke="#2a7a1a" stroke-width=".9"/><path d="M18.5 5v16M15.0 13l7 -2" stroke="#fff" stroke-width=".9"/></svg>
<svg style="left:288px;top:88px" width="24" height="24" viewBox="0 0 24 24"><path d="M2.0 7l7 -3v17l-7 3z" fill="#5cb844" stroke="#2a7a1a" stroke-width=".9"/><path d="M5.5 6v16M2.0 14l7 -2" stroke="#fff" stroke-width=".9"/><path d="M8.5 7l7 -3v17l-7 3z" fill="#b8e4a8" stroke="#2a7a1a" stroke-width=".9"/><path d="M12.0 6v16M8.5 14l7 -2" stroke="#fff" stroke-width=".9"/><path d="M15.0 7l7 -3v17l-7 3z" fill="#b8e4a8" stroke="#2a7a1a" stroke-width=".9"/><path d="M18.5 6v16M15.0 14l7 -2" stroke="#fff" stroke-width=".9"/><rect x="12" y="1" width="11" height="10" fill="#e04040" stroke="#a02020" stroke-width=".8"/><path d="M14.5 3.5l6 5M20.5 3.5l-6 5" stroke="#fff" stroke-width="1.5"/></svg>
<svg style="left:314px;top:88px" width="24" height="24" viewBox="0 0 24 24"><path d="M2.0 6l7 -3v17l-7 3z" fill="#5cb844" stroke="#2a7a1a" stroke-width=".9"/><path d="M5.5 5v16M2.0 13l7 -2" stroke="#fff" stroke-width=".9"/><path d="M8.5 6l7 -3v17l-7 3z" fill="#b8e4a8" stroke="#2a7a1a" stroke-width=".9"/><path d="M12.0 5v16M8.5 13l7 -2" stroke="#fff" stroke-width=".9"/><path d="M15.0 6l7 -3v17l-7 3z" fill="#b8e4a8" stroke="#2a7a1a" stroke-width=".9"/><path d="M18.5 5v16M15.0 13l7 -2" stroke="#fff" stroke-width=".9"/><path d="M7 12l5-5v3h8v4h-8v3z" fill="#f0d040" stroke="#b09020" stroke-width=".8"/></svg>
<svg style="left:340px;top:88px" width="24" height="24" viewBox="0 0 24 24"><path d="M2.0 6l7 -3v17l-7 3z" fill="#5cb844" stroke="#2a7a1a" stroke-width=".9"/><path d="M5.5 5v16M2.0 13l7 -2" stroke="#fff" stroke-width=".9"/><path d="M8.5 6l7 -3v17l-7 3z" fill="#b8e4a8" stroke="#2a7a1a" stroke-width=".9"/><path d="M12.0 5v16M8.5 13l7 -2" stroke="#fff" stroke-width=".9"/><path d="M15.0 6l7 -3v17l-7 3z" fill="#b8e4a8" stroke="#2a7a1a" stroke-width=".9"/><path d="M18.5 5v16M15.0 13l7 -2" stroke="#fff" stroke-width=".9"/><path d="M20 12l-5-5v3H7v4h8v3z" fill="#f0d040" stroke="#b09020" stroke-width=".8"/></svg>
<svg style="left:366px;top:88px" width="24" height="24" viewBox="0 0 24 24"><path d="M2.0 6l7 -3v17l-7 3z" fill="#5cb844" stroke="#2a7a1a" stroke-width=".9"/><path d="M5.5 5v16M2.0 13l7 -2" stroke="#fff" stroke-width=".9"/><path d="M8.5 6l7 -3v17l-7 3z" fill="#b8e4a8" stroke="#2a7a1a" stroke-width=".9"/><path d="M12.0 5v16M8.5 13l7 -2" stroke="#fff" stroke-width=".9"/><path d="M15.0 6l7 -3v17l-7 3z" fill="#b8e4a8" stroke="#2a7a1a" stroke-width=".9"/><path d="M18.5 5v16M15.0 13l7 -2" stroke="#fff" stroke-width=".9"/><circle cx="13" cy="13" r="5" fill="none" stroke="#f08030" stroke-width="3"/></svg>
<svg style="left:392px;top:88px" width="24" height="24" viewBox="0 0 24 24"><circle cx="9" cy="9" r="7.5" fill="#d8f0f8" stroke="#5a8a9a" stroke-width="1.5"/><path d="M6.0 6l7 -3v17l-7 3z" fill="#5cb844" stroke="#2a7a1a" stroke-width=".9"/><path d="M9.5 5v16M6.0 13l7 -2" stroke="#fff" stroke-width=".9"/><path d="M14 14l8 8" stroke="#999" stroke-width="2.4"/></svg>
<svg style="left:433px;top:88px" width="24" height="24" viewBox="0 0 24 24"><circle cx="5" cy="19" r="4" fill="#d9a070" stroke="#9a6a40" stroke-width=".8"/><rect x="8" y="1" width="14" height="14" fill="#f3e39a" stroke="#4a3c18" stroke-width="1.2"/><path d="M11 4l8 8M11 4h4M11 4v4M19 12h-4M19 12v-4" stroke="#222" stroke-width="1.3" fill="none"/></svg>
<svg style="left:458px;top:88px" width="24" height="24" viewBox="0 0 24 24"><path d="M3 5 L3 19 L8 23 L22 23" fill="none" stroke="#9b6a3a" stroke-width="1" stroke-dasharray="1.5 1"/><rect x="6" y="1" width="14" height="14" fill="#f3e39a" stroke="#4a3c18" stroke-width="1.2"/><path d="M9 4l8 8M9 4h4M9 4v4M17 12h-4M17 12v-4" stroke="#222" stroke-width="1.3" fill="none"/></svg>
<svg style="left:484px;top:88px" width="24" height="24" viewBox="0 0 24 24"><path d="M1 5 L1 19 L6 23 L22 23" fill="none" stroke="#9b6a3a" stroke-width="1" stroke-dasharray="1.5 1"/><path d="M4 4 L4 18 L8 21 L22 21" fill="none" stroke="#9b6a3a" stroke-width="1" stroke-dasharray="1.5 1"/><rect x="8" y="1" width="14" height="14" fill="#f3e39a" stroke="#4a3c18" stroke-width="1.2"/><path d="M11 4l8 8M11 4h4M11 4v4M19 12h-4M19 12v-4" stroke="#222" stroke-width="1.3" fill="none"/></svg>
<svg style="left:511px;top:88px" width="24" height="24" viewBox="0 0 24 24"><path d="M3 12 L3 19 L8 23 L17 23" fill="none" stroke="#9b6a3a" stroke-width="1" stroke-dasharray="1.5 1"/><path d="M12 16 L19 23" fill="none" stroke="#9b6a3a" stroke-width="1.0"/><rect x="8" y="1" width="14" height="14" fill="#f3e39a" stroke="#4a3c18" stroke-width="1.2"/><path d="M18.0 8.0a3 3 0 1 1 -3 -3h2" stroke="#222" stroke-width="1.4" fill="none"/><path d="M16.0 3.5l2.5 1.8l-2.5 1.8z" fill="#222"/></svg>
<svg style="left:537px;top:88px" width="24" height="24" viewBox="0 0 24 24"><path d="M3 12 L3 19 L8 23 L17 23" fill="none" stroke="#9b6a3a" stroke-width="1" stroke-dasharray="1.5 1"/><path d="M10 16 L12 20 L19 23" fill="none" stroke="#9b6a3a" stroke-width="1.0"/><rect x="8" y="1" width="14" height="14" fill="#f3e39a" stroke="#4a3c18" stroke-width="1.2"/><path d="M18.0 8.0a3 3 0 1 1 -3 -3h2" stroke="#222" stroke-width="1.4" fill="none"/><path d="M16.0 3.5l2.5 1.8l-2.5 1.8z" fill="#222"/></svg>
<svg style="left:571px;top:88px" width="24" height="24" viewBox="0 0 24 24"><circle cx="5" cy="19" r="4" fill="#d9a070" stroke="#9a6a40" stroke-width=".8"/><path d="M12 2l9 9M21 2l-9 9" stroke="#e0301c" stroke-width="2.4" stroke-linecap="round"/></svg>
<svg style="left:597px;top:88px" width="24" height="24" viewBox="0 0 24 24"><path d="M3 8 L3 18 L9 23 L22 23" fill="none" stroke="#9b6a3a" stroke-width="1.0"/><path d="M12 2l9 9M21 2l-9 9" stroke="#e0301c" stroke-width="2.4" stroke-linecap="round"/></svg>
<svg style="left:623px;top:88px" width="24" height="24" viewBox="0 0 24 24"><path d="M2 8 L2 18 L7 23 L22 23" fill="none" stroke="#9b6a3a" stroke-width="1.0"/><path d="M5 8 L5 17 L9 21 L22 21" fill="none" stroke="#9b6a3a" stroke-width="1.0"/><path d="M12 2l9 9M21 2l-9 9" stroke="#e0301c" stroke-width="2.4" stroke-linecap="round"/></svg>
<svg style="left:649px;top:88px" width="24" height="24" viewBox="0 0 24 24"><path d="M1 8 L1 18 L6 23 L22 23" fill="none" stroke="#9b6a3a" stroke-width="1.0"/><path d="M4 8 L4 17 L8 21 L22 21" fill="none" stroke="#9b6a3a" stroke-width="1.0"/><path d="M7 8 L7 16 L10 19 L22 19" fill="none" stroke="#9b6a3a" stroke-width="1.0"/><path d="M12 2l9 9M21 2l-9 9" stroke="#e0301c" stroke-width="2.4" stroke-linecap="round"/></svg>
<svg style="left:671px;top:88px" width="24" height="24" viewBox="0 0 24 24"><rect x="1" y="4" width="21" height="17" fill="#eaf2fa" stroke="#6a8ab0" stroke-width="1"/><path d="M7 8l9 9M16 8l-9 9" stroke="#e0301c" stroke-width="2.6" stroke-linecap="round"/></svg>
<svg style="left:697px;top:88px" width="24" height="24" viewBox="0 0 24 24"><rect x="1" y="1" width="16" height="12" fill="#eef4fa" stroke="#7a9ab8" stroke-width=".8"/><rect x="4" y="4" width="16" height="12" fill="#eef4fa" stroke="#7a9ab8" stroke-width=".8"/><rect x="7" y="7" width="16" height="12" fill="#eef4fa" stroke="#7a9ab8" stroke-width=".8"/><path d="M11 13l9 9M20 13l-9 9" stroke="#e0301c" stroke-width="2.6" stroke-linecap="round"/></svg>
<svg style="left:732px;top:88px" width="24" height="24" viewBox="0 0 24 24"><circle cx="5" cy="19" r="4" fill="#d9a070" stroke="#9a6a40" stroke-width=".8"/><rect x="8" y="1" width="14" height="14" fill="#f3e39a" stroke="#4a3c18" stroke-width="1.2"/><path d="M15.0 3.5v9M10.5 8.0h9" stroke="#222" stroke-width="1.6"/></svg>
<svg style="left:757px;top:88px" width="24" height="24" viewBox="0 0 24 24"><path d="M3 5 L3 19 L8 23 L22 23" fill="none" stroke="#9b6a3a" stroke-width="1.0"/><path d="M1 8 L1 20 L6 24 L22 24" fill="none" stroke="#9b6a3a" stroke-width="1.0"/><rect x="8" y="1" width="14" height="14" fill="#f3e39a" stroke="#4a3c18" stroke-width="1.2"/><path d="M15.0 3.5v9M10.5 8.0h9" stroke="#222" stroke-width="1.6"/></svg>
<svg style="left:784px;top:88px" width="24" height="24" viewBox="0 0 24 24"><path d="M1 5 L1 20 L6 24 L22 24" fill="none" stroke="#9b6a3a" stroke-width="1.0"/><path d="M3 5 L3 19 L8 22 L22 22" fill="none" stroke="#9b6a3a" stroke-width="1.0"/><path d="M5 5 L5 18 L9 20 L22 20" fill="none" stroke="#9b6a3a" stroke-width="1.0"/><rect x="8" y="1" width="14" height="14" fill="#f3e39a" stroke="#4a3c18" stroke-width="1.2"/><path d="M15.0 3.5v9M10.5 8.0h9" stroke="#222" stroke-width="1.6"/></svg>
<svg style="left:807px;top:88px" width="24" height="24" viewBox="0 0 24 24"><path d="M1 10 L1 19 L6 23 L14 23" fill="none" stroke="#9b6a3a" stroke-width="1.0"/><path d="M1 10 L3 22" fill="none" stroke="#9b6a3a" stroke-width="1.0"/><rect x="10" y="10" width="11" height="11" fill="#f3e39a" stroke="#4a3c18" stroke-width="1.2"/><path d="M17 14a2.3 2.3 0 1 1 -2 -1" stroke="#222" fill="none"/><rect x="10" y="1" width="11" height="11" fill="#f3e39a" stroke="#4a3c18" stroke-width="1.2"/><path d="M15.5 3.5v6M12.5 6.5h6" stroke="#222" stroke-width="1.6"/></svg>
<svg style="left:832px;top:88px" width="24" height="24" viewBox="0 0 24 24"><path d="M1 10 L1 19 L6 23 L12 23" fill="none" stroke="#9b6a3a" stroke-width="1.0"/><path d="M4 10 L4 18 L8 21 L12 21" fill="none" stroke="#9b6a3a" stroke-width="1.0"/><rect x="10" y="10" width="11" height="11" fill="#f3e39a" stroke="#4a3c18" stroke-width="1.2"/><path d="M17 14a2.3 2.3 0 1 1 -2 -1" stroke="#222" fill="none"/><rect x="10" y="1" width="11" height="11" fill="#f3e39a" stroke="#4a3c18" stroke-width="1.2"/><path d="M15.5 3.5v6M12.5 6.5h6" stroke="#222" stroke-width="1.6"/><rect x="12" y="12" width="11" height="11" fill="#f3e39a" stroke="#4a3c18" stroke-width="1.2"/><path d="M19 16a2.3 2.3 0 1 1 -2 -1" stroke="#222" fill="none"/><rect x="12" y="3" width="11" height="11" fill="#f3e39a" stroke="#4a3c18" stroke-width="1.2"/><path d="M17.5 5.5v6M14.5 8.5h6" stroke="#222" stroke-width="1.6"/></svg>
<svg style="left:862px;top:88px" width="24" height="24" viewBox="0 0 24 24"><path d="M2 8 L2 18 L7 23 L22 23" fill="none" stroke="#9b6a3a" stroke-width="1.0"/><path d="M9 19L19 10" stroke="#8a70d8" stroke-width="3" stroke-linecap="butt"/><path d="M19 10l1.5 -1.5" stroke="#d06060" stroke-width="3"/><rect x="5" y="1" width="17" height="7" fill="#f3e39a" stroke="#8a7a40" stroke-width=".7"/><text x="6.5" y="6.8" font-size="5.5" font-family="Liberation Sans" fill="#222">Abc 123</text></svg>
<svg style="left:889px;top:88px" width="24" height="24" viewBox="0 0 24 24"><path d="M1 8 L1 19 L6 24 L22 24" fill="none" stroke="#9b6a3a" stroke-width="1.0"/><path d="M4 8 L4 17 L8 21 L22 21" fill="none" stroke="#9b6a3a" stroke-width="1.0"/><path d="M9 19L19 10" stroke="#8a70d8" stroke-width="3" stroke-linecap="butt"/><path d="M19 10l1.5 -1.5" stroke="#d06060" stroke-width="3"/><rect x="5" y="1" width="17" height="7" fill="#f3e39a" stroke="#8a7a40" stroke-width=".7"/><text x="6.5" y="6.8" font-size="5.5" font-family="Liberation Sans" fill="#222">Abc 123</text></svg>
<svg style="left:915px;top:88px" width="24" height="24" viewBox="0 0 24 24"><path d="M1 8 L1 19 L6 24 L22 24" fill="none" stroke="#9b6a3a" stroke-width="1.0"/><path d="M3 8 L3 18 L8 22 L22 22" fill="none" stroke="#9b6a3a" stroke-width="1.0"/><path d="M5 8 L5 17 L9 20 L22 20" fill="none" stroke="#9b6a3a" stroke-width="1.0"/><path d="M9 19L19 10" stroke="#8a70d8" stroke-width="3" stroke-linecap="butt"/><path d="M19 10l1.5 -1.5" stroke="#d06060" stroke-width="3"/><rect x="5" y="1" width="17" height="7" fill="#f3e39a" stroke="#8a7a40" stroke-width=".7"/><text x="6.5" y="6.8" font-size="5.5" font-family="Liberation Sans" fill="#222">Abc 123</text></svg>
<svg style="left:946px;top:88px" width="24" height="24" viewBox="0 0 24 24"><circle cx="5" cy="19" r="4" fill="#d9a070" stroke="#9a6a40" stroke-width=".8"/><rect x="11" y="2" width="11" height="13" fill="#dfe8f4" stroke="#6a88b8" stroke-width=".8"/><rect x="12" y="3" width="9" height="2.5" fill="#7fa0d0"/><rect x="12.5" y="6.5" width="1.6" height="1.5" fill="#5a78a8"/><rect x="15.1" y="6.5" width="1.6" height="1.5" fill="#5a78a8"/><rect x="17.7" y="6.5" width="1.6" height="1.5" fill="#5a78a8"/><rect x="12.5" y="8.9" width="1.6" height="1.5" fill="#5a78a8"/><rect x="15.1" y="8.9" width="1.6" height="1.5" fill="#5a78a8"/><rect x="17.7" y="8.9" width="1.6" height="1.5" fill="#5a78a8"/><rect x="12.5" y="11.3" width="1.6" height="1.5" fill="#5a78a8"/><rect x="15.1" y="11.3" width="1.6" height="1.5" fill="#5a78a8"/><rect x="17.7" y="11.3" width="1.6" height="1.5" fill="#5a78a8"/></svg>
<svg style="left:972px;top:88px" width="24" height="24" viewBox="0 0 24 24"><path d="M2 8 L2 18 L7 23 L22 23" fill="none" stroke="#9b6a3a" stroke-width="1.0"/><rect x="10" y="1" width="11" height="13" fill="#dfe8f4" stroke="#6a88b8" stroke-width=".8"/><rect x="11" y="2" width="9" height="2.5" fill="#7fa0d0"/><rect x="11.5" y="5.5" width="1.6" height="1.5" fill="#5a78a8"/><rect x="14.1" y="5.5" width="1.6" height="1.5" fill="#5a78a8"/><rect x="16.7" y="5.5" width="1.6" height="1.5" fill="#5a78a8"/><rect x="11.5" y="7.9" width="1.6" height="1.5" fill="#5a78a8"/><rect x="14.1" y="7.9" width="1.6" height="1.5" fill="#5a78a8"/><rect x="16.7" y="7.9" width="1.6" height="1.5" fill="#5a78a8"/><rect x="11.5" y="10.3" width="1.6" height="1.5" fill="#5a78a8"/><rect x="14.1" y="10.3" width="1.6" height="1.5" fill="#5a78a8"/><rect x="16.7" y="10.3" width="1.6" height="1.5" fill="#5a78a8"/></svg>
<svg style="left:997px;top:88px" width="24" height="24" viewBox="0 0 24 24"><path d="M1 8 L1 19 L6 24 L22 24" fill="none" stroke="#9b6a3a" stroke-width="1.0"/><path d="M4 8 L4 17 L8 21 L22 21" fill="none" stroke="#9b6a3a" stroke-width="1.0"/><rect x="10" y="1" width="11" height="13" fill="#dfe8f4" stroke="#6a88b8" stroke-width=".8"/><rect x="11" y="2" width="9" height="2.5" fill="#7fa0d0"/><rect x="11.5" y="5.5" width="1.6" height="1.5" fill="#5a78a8"/><rect x="14.1" y="5.5" width="1.6" height="1.5" fill="#5a78a8"/><rect x="16.7" y="5.5" width="1.6" height="1.5" fill="#5a78a8"/><rect x="11.5" y="7.9" width="1.6" height="1.5" fill="#5a78a8"/><rect x="14.1" y="7.9" width="1.6" height="1.5" fill="#5a78a8"/><rect x="16.7" y="7.9" width="1.6" height="1.5" fill="#5a78a8"/><rect x="11.5" y="10.3" width="1.6" height="1.5" fill="#5a78a8"/><rect x="14.1" y="10.3" width="1.6" height="1.5" fill="#5a78a8"/><rect x="16.7" y="10.3" width="1.6" height="1.5" fill="#5a78a8"/></svg>
<svg style="left:1024px;top:88px" width="24" height="24" viewBox="0 0 24 24"><rect x="1" y="11" width="14" height="12" fill="#e8f0f8" stroke="#7a9ab8" stroke-width=".8"/><rect x="10" y="1" width="11" height="13" fill="#dfe8f4" stroke="#6a88b8" stroke-width=".8"/><rect x="11" y="2" width="9" height="2.5" fill="#7fa0d0"/><rect x="11.5" y="5.5" width="1.6" height="1.5" fill="#5a78a8"/><rect x="14.1" y="5.5" width="1.6" height="1.5" fill="#5a78a8"/><rect x="16.7" y="5.5" width="1.6" height="1.5" fill="#5a78a8"/><rect x="11.5" y="7.9" width="1.6" height="1.5" fill="#5a78a8"/><rect x="14.1" y="7.9" width="1.6" height="1.5" fill="#5a78a8"/><rect x="16.7" y="7.9" width="1.6" height="1.5" fill="#5a78a8"/><rect x="11.5" y="10.3" width="1.6" height="1.5" fill="#5a78a8"/><rect x="14.1" y="10.3" width="1.6" height="1.5" fill="#5a78a8"/><rect x="16.7" y="10.3" width="1.6" height="1.5" fill="#5a78a8"/></svg>
<svg style="left:1054px;top:88px" width="24" height="24" viewBox="0 0 24 24"><path d="M2 8 L2 18 L7 23 L22 23" fill="none" stroke="#9b6a3a" stroke-width="1.0"/><rect x="8" y="1" width="13" height="13" fill="#f3e39a" stroke="#4a3c18" stroke-width="1.2"/><path d="M12 6h5a2 2 0 0 1 0 4h-5" stroke="#222" stroke-width="1.3" fill="none"/><path d="M13 4l-2.5 2l2.5 2" stroke="#222" stroke-width="1.3" fill="none"/></svg>
<svg style="left:1080px;top:88px" width="24" height="24" viewBox="0 0 24 24"><path d="M1 8 L1 19 L6 24 L22 24" fill="none" stroke="#9b6a3a" stroke-width="1.0"/><path d="M4 8 L4 17 L8 21 L22 21" fill="none" stroke="#9b6a3a" stroke-width="1.0"/><rect x="9" y="1" width="13" height="13" fill="#f3e39a" stroke="#4a3c18" stroke-width="1.2"/><path d="M13 6h5a2 2 0 0 1 0 4h-5" stroke="#222" stroke-width="1.3" fill="none"/><path d="M14 4l-2.5 2l2.5 2" stroke="#222" stroke-width="1.3" fill="none"/></svg>
<svg style="left:1111px;top:88px" width="24" height="24" viewBox="0 0 24 24"><path d="M2 5 L2 17 L8 23 L22 23" fill="none" stroke="#9b6a3a" stroke-width="1.0"/><path d="M5 3 L21 20" fill="none" stroke="#c06060" stroke-width="0.9" stroke-dasharray="1.5 1.5"/></svg>
<svg style="left:1137px;top:88px" width="24" height="24" viewBox="0 0 24 24"><path d="M4 2h5l14 18l-2 3H4z" fill="none" stroke="#4a8a3a" stroke-dasharray="1.5 1.2"/><path d="M6 4 L6 20 L19 21 L8 4" fill="none" stroke="#9b6a3a" stroke-width="1.0"/></svg>
<svg style="left:1164px;top:88px" width="24" height="24" viewBox="0 0 24 24"><path d="M2 8 L2 18 L7 23 L22 23 L22 15 L14 2 L2 2" fill="none" stroke="#9b6a3a" stroke-width="1.0"/><path d="M8 5 L18 20" fill="none" stroke="#c06060" stroke-width="0.9" stroke-dasharray="1.5 1.5"/></svg>
<svg style="left:1190px;top:88px" width="24" height="24" viewBox="0 0 24 24"><path d="M1 10 L1 19 L6 23 L12 23" fill="none" stroke="#9b6a3a" stroke-width="1.0"/><path d="M4 10 L4 18 L8 21 L12 21" fill="none" stroke="#9b6a3a" stroke-width="1.0"/><path d="M20 3c-6 0-8 5-4 9c4 4 2 10-4 10" stroke="#4a7ab8" stroke-width="1.3" fill="none"/><circle cx="20" cy="3" r="1.4" fill="#fff" stroke="#9b6a3a" stroke-width=".9"/><circle cx="16" cy="12" r="1.4" fill="#fff" stroke="#9b6a3a" stroke-width=".9"/><circle cx="12" cy="22" r="1.4" fill="#fff" stroke="#9b6a3a" stroke-width=".9"/></svg>
<svg style="left:1215px;top:88px" width="24" height="24" viewBox="0 0 24 24"><path d="M2 2 L22 22" fill="none" stroke="#9b6a3a" stroke-width="1.0"/><circle cx="2" cy="2" r="1.4" fill="#fff" stroke="#9b6a3a" stroke-width=".9"/><circle cx="22" cy="22" r="1.4" fill="#fff" stroke="#9b6a3a" stroke-width=".9"/><path d="M12 6v12M6 12h12" stroke="#d08070" stroke-dasharray="2 2"/></svg>
<svg style="left:1247px;top:88px" width="24" height="24" viewBox="0 0 24 24"><circle cx="6" cy="18" r="4.5" fill="#d9a070" stroke="#9a6a40" stroke-width=".8"/><path d="M10 13L20 3" stroke="#8a70d8" stroke-width="3" stroke-linecap="butt"/><path d="M20 3l1.5 -1.5" stroke="#d06060" stroke-width="3"/></svg>
<svg style="left:1272px;top:88px" width="24" height="24" viewBox="0 0 24 24"><rect x="1" y="7" width="16" height="16" fill="#fff" stroke="#6a8ab8" stroke-width="1"/><rect x="1" y="7" width="16" height="3" fill="#7fa0d0"/><path d="M4 14h2M8 14h7M4 17h2M8 17h7M4 20h2M8 20h7" stroke="#8aa0c0" stroke-width=".8"/><rect x="12" y="1" width="12" height="12" fill="#f3e39a" stroke="#4a3c18" stroke-width="1.2"/><path d="M18.0 3.5v7M14.5 7.0h7" stroke="#222" stroke-width="1.6"/></svg>
<div class="a" style="left:142px;top:90px;width:1px;height:21px;background:#b0b0b0"></div>
<div class="a" style="left:562px;top:90px;width:1px;height:21px;background:#b0b0b0"></div>
<div class="a" style="left:723px;top:90px;width:1px;height:21px;background:#b0b0b0"></div>
<div class="a" style="left:860px;top:90px;width:1px;height:21px;background:#b0b0b0"></div>
<div class="a" style="left:941px;top:90px;width:1px;height:21px;background:#b0b0b0"></div>
<div class="a" style="left:1050px;top:90px;width:1px;height:21px;background:#b0b0b0"></div>
<div class="a" style="left:1107px;top:90px;width:1px;height:21px;background:#b0b0b0"></div>
<div class="a" style="left:1242px;top:90px;width:1px;height:21px;background:#b0b0b0"></div>
<div class="a" style="left:0px;top:116px;width:797px;height:29px;background:linear-gradient(#fefefe,#f0f0f0);border-bottom:1px solid #a8a8a8"></div>
<div class="grip" style="left:4px;top:119px;height:19px"></div>
<svg style="left:11px;top:118px" width="24" height="24" viewBox="0 0 24 24"><path d="M1 11h7l2 2h8v10H1z" fill="#f3d88a" stroke="#c8a050" stroke-width=".8"/><path d="M3 15h19l-3 8H1z" fill="#f6d06a" stroke="#c8a050" stroke-width=".8"/><path d="M16.5 0L24 4.5360000000000005L16.5 9.072000000000001L9 4.5360000000000005Z" fill="#7ccc4e"/><path d="M9 4.5360000000000005L16.5 9.072000000000001L16.5 16.8L9 12.264Z" fill="#4fa02c"/><path d="M24 4.5360000000000005L16.5 9.072000000000001L16.5 16.8L24 12.264Z" fill="#2f7c1c"/><path d="M12.75 6.804L12.75 14.532M9 8.4L16.5 12.936M20.25 6.804L20.25 14.532M24 8.4L16.5 12.936M12.75 2.2680000000000002L20.25 6.804M20.25 2.2680000000000002L12.75 6.804" stroke="#a8e08a" stroke-width=".7" fill="none"/><path d="M16.5 0L24 4.5360000000000005L24 12.264L16.5 16.8L9 12.264L9 4.5360000000000005Z" fill="none" stroke="#2a6a16" stroke-width=".6"/></svg>
<svg style="left:37px;top:118px" width="24" height="24" viewBox="0 0 24 24"><path d="M1 6h14l3 3v14h-17z" fill="#7a60b8" stroke="#4a3a80" stroke-width=".8"/><rect x="4" y="7" width="10" height="6.46" fill="#eee"/><rect x="5" y="16.54" width="9" height="5.46" fill="#ddd"/><path d="M16.5 0L24 4.5360000000000005L16.5 9.072000000000001L9 4.5360000000000005Z" fill="#7ccc4e"/><path d="M9 4.5360000000000005L16.5 9.072000000000001L16.5 16.8L9 12.264Z" fill="#4fa02c"/><path d="M24 4.5360000000000005L16.5 9.072000000000001L16.5 16.8L24 12.264Z" fill="#2f7c1c"/><path d="M12.75 6.804L12.75 14.532M9 8.4L16.5 12.936M20.25 6.804L20.25 14.532M24 8.4L16.5 12.936M12.75 2.2680000000000002L20.25 6.804M20.25 2.2680000000000002L12.75 6.804" stroke="#a8e08a" stroke-width=".7" fill="none"/><path d="M16.5 0L24 4.5360000000000005L24 12.264L16.5 16.8L9 12.264L9 4.5360000000000005Z" fill="none" stroke="#2a6a16" stroke-width=".6"/></svg>
<svg style="left:63px;top:118px" width="24" height="24" viewBox="0 0 24 24"><path d="M1 6h14l3 3v14h-17z" fill="#7a60b8" stroke="#4a3a80" stroke-width=".8"/><rect x="4" y="7" width="10" height="6.46" fill="#eee"/><rect x="5" y="16.54" width="9" height="5.46" fill="#ddd"/><path d="M4 13L13 4" stroke="#8a70d8" stroke-width="3" stroke-linecap="butt"/><path d="M13 4l1.5 -1.5" stroke="#d06060" stroke-width="3"/><path d="M16.5 1L24 5.5360000000000005L16.5 10.072000000000001L9 5.5360000000000005Z" fill="#7ccc4e"/><path d="M9 5.5360000000000005L16.5 10.072000000000001L16.5 17.8L9 13.264Z" fill="#4fa02c"/><path d="M24 5.5360000000000005L16.5 10.072000000000001L16.5 17.8L24 13.264Z" fill="#2f7c1c"/><path d="M12.75 7.804L12.75 15.532M9 9.4L16.5 13.936M20.25 7.804L20.25 15.532M24 9.4L16.5 13.936M12.75 3.2680000000000002L20.25 7.804M20.25 3.2680000000000002L12.75 7.804" stroke="#a8e08a" stroke-width=".7" fill="none"/><path d="M16.5 1L24 5.5360000000000005L24 13.264L16.5 17.8L9 13.264L9 5.5360000000000005Z" fill="none" stroke="#2a6a16" stroke-width=".6"/></svg>
<svg style="left:89px;top:118px" width="24" height="24" viewBox="0 0 24 24"><path d="M9.0 6L17 10.8384L9.0 15.676800000000002L1 10.8384Z" fill="#7ccc4e"/><path d="M1 10.8384L9.0 15.676800000000002L9.0 23.92L1 19.0816Z" fill="#4fa02c"/><path d="M17 10.8384L9.0 15.676800000000002L9.0 23.92L17 19.0816Z" fill="#2f7c1c"/><path d="M5.0 13.257600000000002L5.0 21.5008M1 14.96L9.0 19.7984M13.0 13.257600000000002L13.0 21.5008M17 14.96L9.0 19.7984M5.0 8.4192L13.0 13.257600000000002M13.0 8.4192L5.0 13.257600000000002" stroke="#a8e08a" stroke-width=".7" fill="none"/><path d="M9.0 6L17 10.8384L17 19.0816L9.0 23.92L1 19.0816L1 10.8384Z" fill="none" stroke="#2a6a16" stroke-width=".6"/><path d="M11 5h5l1.5 -2h4.5v9h-11z" fill="#f5d27a" stroke="#c9a040" stroke-width=".8"/><path d="M16 4c1-3 4-3 5 1" stroke="#222" stroke-width="1.4" fill="none"/></svg>
<svg style="left:115px;top:118px" width="24" height="24" viewBox="0 0 24 24"><path d="M9.0 6L17 10.8384L9.0 15.676800000000002L1 10.8384Z" fill="#7ccc4e"/><path d="M1 10.8384L9.0 15.676800000000002L9.0 23.92L1 19.0816Z" fill="#4fa02c"/><path d="M17 10.8384L9.0 15.676800000000002L9.0 23.92L17 19.0816Z" fill="#2f7c1c"/><path d="M5.0 13.257600000000002L5.0 21.5008M1 14.96L9.0 19.7984M13.0 13.257600000000002L13.0 21.5008M17 14.96L9.0 19.7984M5.0 8.4192L13.0 13.257600000000002M13.0 8.4192L5.0 13.257600000000002" stroke="#a8e08a" stroke-width=".7" fill="none"/><path d="M9.0 6L17 10.8384L17 19.0816L9.0 23.92L1 19.0816L1 10.8384Z" fill="none" stroke="#2a6a16" stroke-width=".6"/><rect x="14" y="0" width="10" height="8" fill="#2a2ac0" stroke="#6a6a7a" stroke-width=".9"/><rect x="15" y="1" width="5" height="3" fill="#5a5ae0"/><path d="M19 8v1.5M16.5 9.5h5" stroke="#666" stroke-width="1.1"/></svg>
<svg style="left:141px;top:118px" width="24" height="24" viewBox="0 0 24 24"><path d="M9.0 6L17 10.8384L9.0 15.676800000000002L1 10.8384Z" fill="#b8b8d0"/><path d="M1 10.8384L9.0 15.676800000000002L9.0 23.92L1 19.0816Z" fill="#8a8aa8"/><path d="M17 10.8384L9.0 15.676800000000002L9.0 23.92L17 19.0816Z" fill="#6a6a88"/><path d="M5.0 13.257600000000002L5.0 21.5008M1 14.96L9.0 19.7984M13.0 13.257600000000002L13.0 21.5008M17 14.96L9.0 19.7984M5.0 8.4192L13.0 13.257600000000002M13.0 8.4192L5.0 13.257600000000002" stroke="#c8c8e0" stroke-width=".7" fill="none"/><path d="M9.0 6L17 10.8384L17 19.0816L9.0 23.92L1 19.0816L1 10.8384Z" fill="none" stroke="#5a5a78" stroke-width=".6"/><rect x="14" y="0" width="9" height="7" fill="#20204a" stroke="#555" stroke-width=".8"/><path d="M17 8.5h3" stroke="#555" stroke-width="1.2"/></svg>
<svg style="left:171px;top:118px" width="24" height="24" viewBox="0 0 24 24"><path d="M9.0 6L17 10.8384L9.0 15.676800000000002L1 10.8384Z" fill="#7ccc4e"/><path d="M1 10.8384L9.0 15.676800000000002L9.0 23.92L1 19.0816Z" fill="#4fa02c"/><path d="M17 10.8384L9.0 15.676800000000002L9.0 23.92L17 19.0816Z" fill="#2f7c1c"/><path d="M5.0 13.257600000000002L5.0 21.5008M1 14.96L9.0 19.7984M13.0 13.257600000000002L13.0 21.5008M17 14.96L9.0 19.7984M5.0 8.4192L13.0 13.257600000000002M13.0 8.4192L5.0 13.257600000000002" stroke="#a8e08a" stroke-width=".7" fill="none"/><path d="M9.0 6L17 10.8384L17 19.0816L9.0 23.92L1 19.0816L1 10.8384Z" fill="none" stroke="#2a6a16" stroke-width=".6"/><rect x="11" y="0" width="11" height="11" fill="#f3e39a" stroke="#4a3c18" stroke-width="1.2"/><path d="M16.5 2.5v6M13.5 5.5h6" stroke="#222" stroke-width="1.6"/><rect x="13" y="15" width="10" height="8" fill="#2a2ac0" stroke="#6a6a7a" stroke-width=".9"/><rect x="14" y="16" width="5" height="3" fill="#5a5ae0"/><path d="M18 23v1.5M15.5 24.5h5" stroke="#666" stroke-width="1.1"/></svg>
<svg style="left:197px;top:118px" width="24" height="24" viewBox="0 0 24 24"><path d="M9.0 6L17 10.8384L9.0 15.676800000000002L1 10.8384Z" fill="#7ccc4e"/><path d="M1 10.8384L9.0 15.676800000000002L9.0 23.92L1 19.0816Z" fill="#4fa02c"/><path d="M17 10.8384L9.0 15.676800000000002L9.0 23.92L17 19.0816Z" fill="#2f7c1c"/><path d="M5.0 13.257600000000002L5.0 21.5008M1 14.96L9.0 19.7984M13.0 13.257600000000002L13.0 21.5008M17 14.96L9.0 19.7984M5.0 8.4192L13.0 13.257600000000002M13.0 8.4192L5.0 13.257600000000002" stroke="#a8e08a" stroke-width=".7" fill="none"/><path d="M9.0 6L17 10.8384L17 19.0816L9.0 23.92L1 19.0816L1 10.8384Z" fill="none" stroke="#2a6a16" stroke-width=".6"/><path d="M10 12L20 2" stroke="#8a70d8" stroke-width="2.5" stroke-linecap="butt"/><path d="M20 2l1.5 -1.5" stroke="#d06060" stroke-width="2.5"/><rect x="13" y="15" width="10" height="8" fill="#2a2ac0" stroke="#6a6a7a" stroke-width=".9"/><rect x="14" y="16" width="5" height="3" fill="#5a5ae0"/><path d="M18 23v1.5M15.5 24.5h5" stroke="#666" stroke-width="1.1"/></svg>
<svg style="left:223px;top:118px" width="24" height="24" viewBox="0 0 24 24"><path d="M9.0 6L17 10.8384L9.0 15.676800000000002L1 10.8384Z" fill="#7ccc4e"/><path d="M1 10.8384L9.0 15.676800000000002L9.0 23.92L1 19.0816Z" fill="#4fa02c"/><path d="M17 10.8384L9.0 15.676800000000002L9.0 23.92L17 19.0816Z" fill="#2f7c1c"/><path d="M5.0 13.257600000000002L5.0 21.5008M1 14.96L9.0 19.7984M13.0 13.257600000000002L13.0 21.5008M17 14.96L9.0 19.7984M5.0 8.4192L13.0 13.257600000000002M13.0 8.4192L5.0 13.257600000000002" stroke="#a8e08a" stroke-width=".7" fill="none"/><path d="M9.0 6L17 10.8384L17 19.0816L9.0 23.92L1 19.0816L1 10.8384Z" fill="none" stroke="#2a6a16" stroke-width=".6"/><path d="M10 6c2-4 8-4 10 0" stroke="#3a7ad0" stroke-width="2.5" fill="none"/><path d="M7 6l4-3l0 6z" fill="#3a7ad0"/><rect x="13" y="15" width="10" height="8" fill="#2a2ac0" stroke="#6a6a7a" stroke-width=".9"/><rect x="14" y="16" width="5" height="3" fill="#5a5ae0"/><path d="M18 23v1.5M15.5 24.5h5" stroke="#666" stroke-width="1.1"/></svg>
<svg style="left:249px;top:118px" width="24" height="24" viewBox="0 0 24 24"><path d="M9.0 6L17 10.8384L9.0 15.676800000000002L1 10.8384Z" fill="#7ccc4e"/><path d="M1 10.8384L9.0 15.676800000000002L9.0 23.92L1 19.0816Z" fill="#4fa02c"/><path d="M17 10.8384L9.0 15.676800000000002L9.0 23.92L17 19.0816Z" fill="#2f7c1c"/><path d="M5.0 13.257600000000002L5.0 21.5008M1 14.96L9.0 19.7984M13.0 13.257600000000002L13.0 21.5008M17 14.96L9.0 19.7984M5.0 8.4192L13.0 13.257600000000002M13.0 8.4192L5.0 13.257600000000002" stroke="#a8e08a" stroke-width=".7" fill="none"/><path d="M9.0 6L17 10.8384L17 19.0816L9.0 23.92L1 19.0816L1 10.8384Z" fill="none" stroke="#2a6a16" stroke-width=".6"/><rect x="11" y="0" width="11" height="11" fill="#f3e39a" stroke="#4a3c18" stroke-width="1.2"/><path d="M13.5 5.5h6" stroke="#222" stroke-width="1.6"/><rect x="13" y="15" width="10" height="8" fill="#2a2ac0" stroke="#6a6a7a" stroke-width=".9"/><rect x="14" y="16" width="5" height="3" fill="#5a5ae0"/><path d="M18 23v1.5M15.5 24.5h5" stroke="#666" stroke-width="1.1"/></svg>
<svg style="left:275px;top:118px" width="24" height="24" viewBox="0 0 24 24"><path d="M1 6h12l3 3v12h-15z" fill="#7a60b8" stroke="#4a3a80" stroke-width=".8"/><rect x="4" y="7" width="8" height="5.7" fill="#eee"/><rect x="5" y="15.3" width="7" height="4.7" fill="#ddd"/><path d="M15.899999999999999 1L22.799999999999997 5.17312L15.899999999999999 9.34624L9 5.17312Z" fill="#7ccc4e"/><path d="M9 5.17312L15.899999999999999 9.34624L15.899999999999999 16.456L9 12.282879999999999Z" fill="#4fa02c"/><path d="M22.799999999999997 5.17312L15.899999999999999 9.34624L15.899999999999999 16.456L22.799999999999997 12.282879999999999Z" fill="#2f7c1c"/><path d="M12.45 7.2596799999999995L12.45 14.369439999999999M9 8.728L15.899999999999999 12.901119999999999M19.349999999999998 7.2596799999999995L19.349999999999998 14.369439999999999M22.799999999999997 8.728L15.899999999999999 12.901119999999999M12.45 3.08656L19.349999999999998 7.2596799999999995M19.349999999999998 3.08656L12.45 7.2596799999999995" stroke="#a8e08a" stroke-width=".7" fill="none"/><path d="M15.899999999999999 1L22.799999999999997 5.17312L22.799999999999997 12.282879999999999L15.899999999999999 16.456L9 12.282879999999999L9 5.17312Z" fill="none" stroke="#2a6a16" stroke-width=".6"/><rect x="13" y="15" width="10" height="8" fill="#2a2ac0" stroke="#6a6a7a" stroke-width=".9"/><rect x="14" y="16" width="5" height="3" fill="#5a5ae0"/><path d="M18 23v1.5M15.5 24.5h5" stroke="#666" stroke-width="1.1"/></svg>
<svg style="left:301px;top:118px" width="24" height="24" viewBox="0 0 24 24"><path d="M9.0 6L17 10.8384L9.0 15.676800000000002L1 10.8384Z" fill="#7ccc4e"/><path d="M1 10.8384L9.0 15.676800000000002L9.0 23.92L1 19.0816Z" fill="#4fa02c"/><path d="M17 10.8384L9.0 15.676800000000002L9.0 23.92L17 19.0816Z" fill="#2f7c1c"/><path d="M5.0 13.257600000000002L5.0 21.5008M1 14.96L9.0 19.7984M13.0 13.257600000000002L13.0 21.5008M17 14.96L9.0 19.7984M5.0 8.4192L13.0 13.257600000000002M13.0 8.4192L5.0 13.257600000000002" stroke="#a8e08a" stroke-width=".7" fill="none"/><path d="M9.0 6L17 10.8384L17 19.0816L9.0 23.92L1 19.0816L1 10.8384Z" fill="none" stroke="#2a6a16" stroke-width=".6"/><rect x="11" y="0" width="11" height="11" fill="#f3e39a" stroke="#4a3c18" stroke-width="1.2"/><text x="12.5" y="9" font-size="8" font-weight="bold" fill="#222">%</text></svg>
<svg style="left:327px;top:118px" width="24" height="24" viewBox="0 0 24 24"><path d="M4 8l7-4l8 4v11l-8 4l-7-4z" fill="#f0f8f0" stroke="#7ab870"/><path d="M4 8l7 4l8-4M11 12v11M4 13l7 4l8-4" stroke="#7ab870" stroke-width=".8" fill="none"/><rect x="8" y="11" width="5" height="5" fill="#5a9a3a"/><rect x="13" y="0" width="10" height="8" fill="#2a2ac0" stroke="#6a6a7a" stroke-width=".9"/><rect x="14" y="1" width="5" height="3" fill="#5a5ae0"/><path d="M18 8v1.5M15.5 9.5h5" stroke="#666" stroke-width="1.1"/></svg>
<svg style="left:353px;top:118px" width="24" height="24" viewBox="0 0 24 24"><path d="M9.0 6L17 10.8384L9.0 15.676800000000002L1 10.8384Z" fill="#7ccc4e"/><path d="M1 10.8384L9.0 15.676800000000002L9.0 23.92L1 19.0816Z" fill="#4fa02c"/><path d="M17 10.8384L9.0 15.676800000000002L9.0 23.92L17 19.0816Z" fill="#2f7c1c"/><path d="M5.0 13.257600000000002L5.0 21.5008M1 14.96L9.0 19.7984M13.0 13.257600000000002L13.0 21.5008M17 14.96L9.0 19.7984M5.0 8.4192L13.0 13.257600000000002M13.0 8.4192L5.0 13.257600000000002" stroke="#a8e08a" stroke-width=".7" fill="none"/><path d="M9.0 6L17 10.8384L17 19.0816L9.0 23.92L1 19.0816L1 10.8384Z" fill="none" stroke="#2a6a16" stroke-width=".6"/><path d="M10 12L20 2" stroke="#8a70d8" stroke-width="2.5" stroke-linecap="butt"/><path d="M20 2l1.5 -1.5" stroke="#d06060" stroke-width="2.5"/></svg>
<svg style="left:384px;top:118px" width="24" height="24" viewBox="0 0 24 24"><rect x="1" y="8" width="15" height="15" fill="#4aa83a" stroke="#2a7a1a"/><path d="M8.5 8v15M1 15.5h15" stroke="#fff" stroke-width="1.2"/><rect x="13" y="1" width="10" height="8" fill="#2a2ac0" stroke="#6a6a7a" stroke-width=".9"/><rect x="14" y="2" width="5" height="3" fill="#5a5ae0"/><path d="M18 9v1.5M15.5 10.5h5" stroke="#666" stroke-width="1.1"/></svg>
<svg style="left:408px;top:118px" width="24" height="24" viewBox="0 0 24 24"><path d="M3 8.0h8v8h-8z" fill="#62b33c" stroke="#2d6a18" stroke-width=".6"/><path d="M3 8.0l4.0 -4.0h8l-4.0 4.0z" fill="#8fd060" stroke="#2d6a18" stroke-width=".6"/><path d="M11 8.0l4.0 -4.0v8l-4.0 4.0z" fill="#3f8f22" stroke="#2d6a18" stroke-width=".6"/></svg>
<svg style="left:467px;top:118px" width="24" height="24" viewBox="0 0 24 24"><path d="M3 8l8-5l9 5v10l-9 5l-8-5z" fill="#e8a040"/><path d="M3 8l8 5v10l-8-5z" fill="#4a9ad8"/><path d="M11 13l9-5v10l-9 5z" fill="#60b840"/><path d="M3 8l8-5l9 5l-9 5z" fill="#e05040"/><circle cx="11" cy="13" r="3" fill="#f0e060"/><rect x="20" y="1" width="4" height="22" fill="#eee" stroke="#aaa" stroke-width=".5"/><path d="M20 5h4M20 9h4" stroke="#e04040" stroke-width="2"/><path d="M20 13h4" stroke="#4a9ad8" stroke-width="2"/><path d="M20 17h4" stroke="#60b840" stroke-width="2"/></svg>
<svg style="left:493px;top:118px" width="24" height="24" viewBox="0 0 24 24"><path d="M3 8l8-5l9 5v10l-9 5l-8-5z" fill="#f4fbf2" stroke="#8ac880"/><path d="M3 8l8 5l9-5M11 13v10M3 13l8 5l9-5M7 5.5l8 5M15 5.5l-8 5" stroke="#8ac880" stroke-width=".8" fill="none"/><rect x="20" y="1" width="4" height="22" fill="#eee" stroke="#aaa" stroke-width=".5"/><path d="M20 5h4M20 9h4" stroke="#e04040" stroke-width="2"/><path d="M20 13h4" stroke="#4a9ad8" stroke-width="2"/><path d="M20 17h4" stroke="#60b840" stroke-width="2"/></svg>
<svg style="left:519px;top:118px" width="24" height="24" viewBox="0 0 24 24"><path d="M9.0 5L17 9.8384L9.0 14.676800000000002L1 9.8384Z" fill="#7ccc4e"/><path d="M1 9.8384L9.0 14.676800000000002L9.0 22.92L1 18.0816Z" fill="#4fa02c"/><path d="M17 9.8384L9.0 14.676800000000002L9.0 22.92L17 18.0816Z" fill="#2f7c1c"/><path d="M5.0 12.257600000000002L5.0 20.5008M1 13.96L9.0 18.7984M13.0 12.257600000000002L13.0 20.5008M17 13.96L9.0 18.7984M5.0 7.4192L13.0 12.257600000000002M13.0 7.4192L5.0 12.257600000000002" stroke="#a8e08a" stroke-width=".7" fill="none"/><path d="M9.0 5L17 9.8384L17 18.0816L9.0 22.92L1 18.0816L1 9.8384Z" fill="none" stroke="#2a6a16" stroke-width=".6"/><rect x="11" y="0" width="11" height="11" fill="#f3e39a" stroke="#4a3c18" stroke-width="1.2"/><path d="M16.5 2.5v6M13.5 5.5h6" stroke="#222" stroke-width="1.6"/><rect x="14" y="15" width="9" height="8" fill="#fff" stroke="#3a5ab8" stroke-width=".8"/><path d="M14 17.7h9M14 20.3h9M17 15v8M20 15v8" stroke="#3a5ab8" stroke-width=".8"/></svg>
<svg style="left:545px;top:118px" width="24" height="24" viewBox="0 0 24 24"><path d="M9.0 5L17 9.8384L9.0 14.676800000000002L1 9.8384Z" fill="#7ccc4e"/><path d="M1 9.8384L9.0 14.676800000000002L9.0 22.92L1 18.0816Z" fill="#4fa02c"/><path d="M17 9.8384L9.0 14.676800000000002L9.0 22.92L17 18.0816Z" fill="#2f7c1c"/><path d="M5.0 12.257600000000002L5.0 20.5008M1 13.96L9.0 18.7984M13.0 12.257600000000002L13.0 20.5008M17 13.96L9.0 18.7984M5.0 7.4192L13.0 12.257600000000002M13.0 7.4192L5.0 12.257600000000002" stroke="#a8e08a" stroke-width=".7" fill="none"/><path d="M9.0 5L17 9.8384L17 18.0816L9.0 22.92L1 18.0816L1 9.8384Z" fill="none" stroke="#2a6a16" stroke-width=".6"/><path d="M11 1l9 9M20 1l-9 9" stroke="#e0301c" stroke-width="2.6" stroke-linecap="round"/><rect x="14" y="15" width="9" height="8" fill="#fff" stroke="#3a5ab8" stroke-width=".8"/><path d="M14 17.7h9M14 20.3h9M17 15v8M20 15v8" stroke="#3a5ab8" stroke-width=".8"/></svg>
<svg style="left:572px;top:118px" width="24" height="24" viewBox="0 0 24 24"><path d="M11.0 5L19 9.8384L11.0 14.676800000000002L3 9.8384Z" fill="#7ccc4e"/><path d="M3 9.8384L11.0 14.676800000000002L11.0 22.92L3 18.0816Z" fill="#4fa02c"/><path d="M19 9.8384L11.0 14.676800000000002L11.0 22.92L19 18.0816Z" fill="#2f7c1c"/><path d="M7.0 12.257600000000002L7.0 20.5008M3 13.96L11.0 18.7984M15.0 12.257600000000002L15.0 20.5008M19 13.96L11.0 18.7984M7.0 7.4192L15.0 12.257600000000002M15.0 7.4192L7.0 12.257600000000002" stroke="#a8e08a" stroke-width=".7" fill="none"/><path d="M11.0 5L19 9.8384L19 18.0816L11.0 22.92L3 18.0816L3 9.8384Z" fill="none" stroke="#2a6a16" stroke-width=".6"/><path d="M10 12L20 2" stroke="#8a70d8" stroke-width="2.5" stroke-linecap="butt"/><path d="M20 2l1.5 -1.5" stroke="#d06060" stroke-width="2.5"/><rect x="1" y="15" width="9" height="8" fill="#fff" stroke="#3a5ab8" stroke-width=".8"/><path d="M1 17.7h9M1 20.3h9M4 15v8M7 15v8" stroke="#3a5ab8" stroke-width=".8"/></svg>
<svg style="left:602px;top:118px" width="24" height="24" viewBox="0 0 24 24"><path d="M9.0 6L17 10.8384L9.0 15.676800000000002L1 10.8384Z" fill="#7ccc4e"/><path d="M1 10.8384L9.0 15.676800000000002L9.0 23.92L1 19.0816Z" fill="#4fa02c"/><path d="M17 10.8384L9.0 15.676800000000002L9.0 23.92L17 19.0816Z" fill="#2f7c1c"/><path d="M5.0 13.257600000000002L5.0 21.5008M1 14.96L9.0 19.7984M13.0 13.257600000000002L13.0 21.5008M17 14.96L9.0 19.7984M5.0 8.4192L13.0 13.257600000000002M13.0 8.4192L5.0 13.257600000000002" stroke="#a8e08a" stroke-width=".7" fill="none"/><path d="M9.0 6L17 10.8384L17 19.0816L9.0 23.92L1 19.0816L1 10.8384Z" fill="none" stroke="#2a6a16" stroke-width=".6"/><rect x="11" y="1" width="11" height="13" fill="#dfe8f4" stroke="#6a88b8" stroke-width=".8"/><rect x="12" y="2" width="9" height="2.5" fill="#7fa0d0"/><rect x="12.5" y="5.5" width="1.6" height="1.5" fill="#5a78a8"/><rect x="15.1" y="5.5" width="1.6" height="1.5" fill="#5a78a8"/><rect x="17.7" y="5.5" width="1.6" height="1.5" fill="#5a78a8"/><rect x="12.5" y="7.9" width="1.6" height="1.5" fill="#5a78a8"/><rect x="15.1" y="7.9" width="1.6" height="1.5" fill="#5a78a8"/><rect x="17.7" y="7.9" width="1.6" height="1.5" fill="#5a78a8"/><rect x="12.5" y="10.3" width="1.6" height="1.5" fill="#5a78a8"/><rect x="15.1" y="10.3" width="1.6" height="1.5" fill="#5a78a8"/><rect x="17.7" y="10.3" width="1.6" height="1.5" fill="#5a78a8"/></svg>
<svg style="left:628px;top:118px" width="24" height="24" viewBox="0 0 24 24"><path d="M9.0 6L17 10.8384L9.0 15.676800000000002L1 10.8384Z" fill="#7ccc4e"/><path d="M1 10.8384L9.0 15.676800000000002L9.0 23.92L1 19.0816Z" fill="#4fa02c"/><path d="M17 10.8384L9.0 15.676800000000002L9.0 23.92L17 19.0816Z" fill="#2f7c1c"/><path d="M5.0 13.257600000000002L5.0 21.5008M1 14.96L9.0 19.7984M13.0 13.257600000000002L13.0 21.5008M17 14.96L9.0 19.7984M5.0 8.4192L13.0 13.257600000000002M13.0 8.4192L5.0 13.257600000000002" stroke="#a8e08a" stroke-width=".7" fill="none"/><path d="M9.0 6L17 10.8384L17 19.0816L9.0 23.92L1 19.0816L1 10.8384Z" fill="none" stroke="#2a6a16" stroke-width=".6"/><path d="M5 10l5-3l5 3v6l-5 3l-5-3z" fill="#c8a0e0"/><circle cx="18" cy="6" r="5.5" fill="#2a7ad0"/><path d="M18 5v4" stroke="#fff" stroke-width="1.6"/><circle cx="18" cy="3" r=".9" fill="#fff"/></svg>
<svg style="left:655px;top:118px" width="24" height="24" viewBox="0 0 24 24"><path d="M9.0 6L17 10.8384L9.0 15.676800000000002L1 10.8384Z" fill="#7ccc4e"/><path d="M1 10.8384L9.0 15.676800000000002L9.0 23.92L1 19.0816Z" fill="#4fa02c"/><path d="M17 10.8384L9.0 15.676800000000002L9.0 23.92L17 19.0816Z" fill="#2f7c1c"/><path d="M5.0 13.257600000000002L5.0 21.5008M1 14.96L9.0 19.7984M13.0 13.257600000000002L13.0 21.5008M17 14.96L9.0 19.7984M5.0 8.4192L13.0 13.257600000000002M13.0 8.4192L5.0 13.257600000000002" stroke="#a8e08a" stroke-width=".7" fill="none"/><path d="M9.0 6L17 10.8384L17 19.0816L9.0 23.92L1 19.0816L1 10.8384Z" fill="none" stroke="#2a6a16" stroke-width=".6"/><path d="M13 1h6l3 3v10h-9z" fill="#fff" stroke="#6a7a9a" stroke-width=".9"/><path d="M15 6h5M15 8h5M15 10h5" stroke="#6a7a9a" stroke-width=".6"/></svg>
<svg style="left:686px;top:118px" width="24" height="24" viewBox="0 0 24 24"><ellipse cx="12" cy="16" rx="11" ry="6" fill="#fff" stroke="#2a5a90" stroke-width="1.6"/><path d="M12 11v10M6 16h12" stroke="#2a5a90" stroke-width="1.2"/><path d="M10 12l2-2l2 2M10 20l2 2l2-2M7 14l-2 2l2 2M17 14l2 2l-2 2" stroke="#2a5a90" fill="none"/><rect x="10" y="0" width="10" height="8" fill="#2a2ac0" stroke="#6a6a7a" stroke-width=".9"/><rect x="11" y="1" width="5" height="3" fill="#5a5ae0"/><path d="M15 8v1.5M12.5 9.5h5" stroke="#666" stroke-width="1.1"/></svg>
<svg style="left:717px;top:118px" width="24" height="24" viewBox="0 0 24 24"><path d="M1 11h9l3 3v9h-12z" fill="#7a60b8" stroke="#4a3a80" stroke-width=".8"/><rect x="4" y="12" width="5" height="4.5600000000000005" fill="#eee"/><rect x="5" y="18.439999999999998" width="4" height="3.5600000000000005" fill="#ddd"/><path d="M6 4h8l3 3v13h-11z" fill="#f4f4f4" stroke="#777" stroke-width=".8"/><path d="M8 9h7M8 12h7M8 15h7" stroke="#888" stroke-width=".7"/><path d="M16.5 1L24 5.5360000000000005L16.5 10.072000000000001L9 5.5360000000000005Z" fill="#7ccc4e"/><path d="M9 5.5360000000000005L16.5 10.072000000000001L16.5 17.8L9 13.264Z" fill="#4fa02c"/><path d="M24 5.5360000000000005L16.5 10.072000000000001L16.5 17.8L24 13.264Z" fill="#2f7c1c"/><path d="M12.75 7.804L12.75 15.532M9 9.4L16.5 13.936M20.25 7.804L20.25 15.532M24 9.4L16.5 13.936M12.75 3.2680000000000002L20.25 7.804M20.25 3.2680000000000002L12.75 7.804" stroke="#a8e08a" stroke-width=".7" fill="none"/><path d="M16.5 1L24 5.5360000000000005L24 13.264L16.5 17.8L9 13.264L9 5.5360000000000005Z" fill="none" stroke="#2a6a16" stroke-width=".6"/></svg>
<svg style="left:742px;top:118px" width="24" height="24" viewBox="0 0 24 24"><path d="M9.0 6L17 10.8384L9.0 15.676800000000002L1 10.8384Z" fill="#7ccc4e"/><path d="M1 10.8384L9.0 15.676800000000002L9.0 23.92L1 19.0816Z" fill="#4fa02c"/><path d="M17 10.8384L9.0 15.676800000000002L9.0 23.92L17 19.0816Z" fill="#2f7c1c"/><path d="M5.0 13.257600000000002L5.0 21.5008M1 14.96L9.0 19.7984M13.0 13.257600000000002L13.0 21.5008M17 14.96L9.0 19.7984M5.0 8.4192L13.0 13.257600000000002M13.0 8.4192L5.0 13.257600000000002" stroke="#a8e08a" stroke-width=".7" fill="none"/><path d="M9.0 6L17 10.8384L17 19.0816L9.0 23.92L1 19.0816L1 10.8384Z" fill="none" stroke="#2a6a16" stroke-width=".6"/><path d="M12 1l9 9M21 1l-9 9" stroke="#e0301c" stroke-width="2.6" stroke-linecap="round"/><path d="M12 12h7l2 2v9h-9z" fill="#f4f4f4" stroke="#777" stroke-width=".8"/><path d="M14 16h5M14 18h5M14 20h5" stroke="#888" stroke-width=".7"/></svg>
<svg style="left:425px;top:118px" width="36" height="24" viewBox="0 0 36 24"><path d="M1 17.0h8v8h-8z" fill="#62b33c" stroke="#2d6a18" stroke-width=".6"/><path d="M1 17.0l4.0 -4.0h8l-4.0 4.0z" fill="#8fd060" stroke="#2d6a18" stroke-width=".6"/><path d="M9 17.0l4.0 -4.0v8l-4.0 4.0z" fill="#3f8f22" stroke="#2d6a18" stroke-width=".6"/><path d="M12 8.0h8v8h-8z" fill="#62b33c" stroke="#2d6a18" stroke-width=".6"/><path d="M12 8.0l4.0 -4.0h8l-4.0 4.0z" fill="#8fd060" stroke="#2d6a18" stroke-width=".6"/><path d="M20 8.0l4.0 -4.0v8l-4.0 4.0z" fill="#3f8f22" stroke="#2d6a18" stroke-width=".6"/><path d="M26 18.0h8v8h-8z" fill="#62b33c" stroke="#2d6a18" stroke-width=".6"/><path d="M26 18.0l4.0 -4.0h8l-4.0 4.0z" fill="#8fd060" stroke="#2d6a18" stroke-width=".6"/><path d="M34 18.0l4.0 -4.0v8l-4.0 4.0z" fill="#3f8f22" stroke="#2d6a18" stroke-width=".6"/><rect x="23" y="1" width="13" height="13" fill="#f3e39a" stroke="#4a3c18" stroke-width="1.2"/><path d="M25.5 7.5h8" stroke="#222" stroke-width="1.6"/></svg>
<svg style="left:769px;top:117px" width="26" height="26" viewBox="0 0 26 26"><rect x=".5" y=".5" width="25" height="25" fill="#f0cfa0" stroke="#d8a878"/><path d="M8.5 7L16 11.536000000000001L8.5 16.072000000000003L1 11.536000000000001Z" fill="#7ccc4e"/><path d="M1 11.536000000000001L8.5 16.072000000000003L8.5 23.8L1 19.264Z" fill="#4fa02c"/><path d="M16 11.536000000000001L8.5 16.072000000000003L8.5 23.8L16 19.264Z" fill="#2f7c1c"/><path d="M4.75 13.804L4.75 21.532M1 15.399999999999999L8.5 19.936M12.25 13.804L12.25 21.532M16 15.399999999999999L8.5 19.936M4.75 9.268L12.25 13.804M12.25 9.268L4.75 13.804" stroke="#a8e08a" stroke-width=".7" fill="none"/><path d="M8.5 7L16 11.536000000000001L16 19.264L8.5 23.8L1 19.264L1 11.536000000000001Z" fill="none" stroke="#2a6a16" stroke-width=".6"/><rect x="11" y="1" width="13" height="11" fill="#e04a40" stroke="#a02820" stroke-width=".8"/><circle cx="15.5" cy="6.5" r="2.5" fill="#fff"/><path d="M18.5 4l3 2.5l-3 2.5z" fill="#fff"/><path d="M13 14h7l2 2v8h-9z" fill="#f4f4f4" stroke="#777" stroke-width=".8"/></svg>
<div class="a" style="left:168px;top:120px;width:1px;height:21px;background:#b0b0b0"></div>
<div class="a" style="left:381px;top:120px;width:1px;height:21px;background:#b0b0b0"></div>
<div class="a" style="left:463px;top:120px;width:1px;height:21px;background:#b0b0b0"></div>
<div class="a" style="left:599px;top:120px;width:1px;height:21px;background:#b0b0b0"></div>
<div class="a" style="left:682px;top:120px;width:1px;height:21px;background:#b0b0b0"></div>
<div class="a" style="left:714px;top:120px;width:1px;height:21px;background:#b0b0b0"></div>
<div class="a" style="left:0px;top:145px;width:1361px;height:535px;background:#f0f0f0"></div>
<div class="a" style="left:0px;top:147px;width:259px;height:24px;background:linear-gradient(#f7f7f7,#e6e6e6)"></div>
<div class="t" style="left:6px;top:152px;font-size:11.5px;color:#111;transform:scaleX(0.9509);transform-origin:0 0">Navigator</div>
<div class="a" style="left:149px;top:148px;width:44px;height:20px;background:linear-gradient(#fafafa,#f0f0f0);border:1px solid #d0d0d0;border-bottom-color:#a8a8a8;border-right-color:#a8a8a8"></div>
<div class="t" style="left:151.8px;top:151px;font-size:11.5px;color:#111;transform:scaleX(0.9144);transform-origin:0 0">Preview</div>
<svg style="left:196px;top:154px" width="11" height="10" viewBox="0 0 11 10"><rect x="1" y="4.5" width="5.5" height="5" fill="none" stroke="#111" stroke-width="1.4"/><path d="M3.5 3V.5h6.5v5.5H7" fill="none" stroke="#111" stroke-width="1.1"/></svg>
<svg style="left:218px;top:154px" width="9" height="10" viewBox="0 0 9 10"><path d="M2 .5h5v5.5H2zM0.5 6h8M4.5 6v4" fill="none" stroke="#111" stroke-width="1.2"/></svg>
<svg style="left:237px;top:154px" width="9" height="9" viewBox="0 0 9 9"><path d="M.5 .5l8 8M8.5 .5l-8 8" stroke="#111" stroke-width=".9"/></svg>
<div class="a" style="left:1px;top:171px;width:258px;height:21px;background:linear-gradient(#eeeeee,#e0e0e0);border-top:1px solid #b8b8b8;border-bottom:2px solid #9a9a9a"></div>
<div class="t" style="left:5px;top:175px;font-size:11.5px;color:#111;transform:scaleX(0.9781);transform-origin:0 0">All Files (.*.*)</div>
<svg style="left:245px;top:179px" width="9" height="6" viewBox="0 0 9 6"><path d="M.5 .5l4 4l4-4" fill="none" stroke="#555" stroke-width="1.2"/></svg>
<div class="a" style="left:1px;top:192px;width:258px;height:222px;background:#fff;border-left:1px solid #a0a0a0;border-right:1px solid #a0a0a0;border-bottom:1px solid #a0a0a0"></div>
<div class="a" style="left:16px;top:192px;width:1px;height:205px;border-left:1px dotted #999"></div>
<div class="a" style="left:35px;top:192px;width:1px;height:205px;border-left:1px dotted #a8a8a8"></div>
<svg style="left:32px;top:196px" width="9" height="9" viewBox="0 0 9 9"><rect x=".5" y=".5" width="8" height="8" fill="#fff" stroke="#8a9aaa"/><path d="M2 4.5h5" stroke="#333" stroke-width="1"/><path d="M4.5 2v5" stroke="#333" stroke-width="1"/></svg>
<div class="a" style="left:41px;top:200px;width:4px;border-top:1px dotted #999"></div>
<svg style="left:46px;top:194px" width="14" height="12" viewBox="0 0 14 12"><path d="M.5 2.5h5l1-1.5h6v10.5H.5z" fill="#f5d57e" stroke="#dcb860" stroke-width=".8"/><rect x=".5" y="3.5" width="13" height="8" fill="#f7d886"/></svg>
<div class="t" style="left:65px;top:193px;font-size:11.5px;transform:scaleX(0.9479);transform-origin:0 0">pit_design</div>
<svg style="left:32px;top:212px" width="9" height="9" viewBox="0 0 9 9"><rect x=".5" y=".5" width="8" height="8" fill="#fff" stroke="#8a9aaa"/><path d="M2 4.5h5" stroke="#333" stroke-width="1"/><path d="M4.5 2v5" stroke="#333" stroke-width="1"/></svg>
<div class="a" style="left:41px;top:216px;width:4px;border-top:1px dotted #999"></div>
<svg style="left:46px;top:210px" width="14" height="12" viewBox="0 0 14 12"><path d="M.5 2.5h5l1-1.5h6v10.5H.5z" fill="#f5d57e" stroke="#dcb860" stroke-width=".8"/><rect x=".5" y="3.5" width="13" height="8" fill="#f7d886"/></svg>
<div class="t" style="left:65px;top:209px;font-size:11.5px;transform:scaleX(0.9708);transform-origin:0 0">plotting</div>
<svg style="left:32px;top:228px" width="9" height="9" viewBox="0 0 9 9"><rect x=".5" y=".5" width="8" height="8" fill="#fff" stroke="#8a9aaa"/><path d="M2 4.5h5" stroke="#333" stroke-width="1"/></svg>
<div class="a" style="left:41px;top:232px;width:4px;border-top:1px dotted #999"></div>
<svg style="left:46px;top:226px" width="14" height="12" viewBox="0 0 14 12"><path d="M.5 2.5h5l1-1.5h6v10.5H.5z" fill="#f5d57e" stroke="#dcb860" stroke-width=".8"/><rect x=".5" y="3.5" width="13" height="8" fill="#f7d886"/></svg>
<div class="t" style="left:65px;top:225px;font-size:11.5px;transform:scaleX(0.9387);transform-origin:0 0">resource</div>
<svg style="left:51px;top:244px" width="9" height="9" viewBox="0 0 9 9"><rect x=".5" y=".5" width="8" height="8" fill="#fff" stroke="#8a9aaa"/><path d="M2 4.5h5" stroke="#333" stroke-width="1"/></svg>
<div class="a" style="left:60px;top:248px;width:4px;border-top:1px dotted #999"></div>
<svg style="left:65px;top:242px" width="14" height="12" viewBox="0 0 14 12"><path d="M.5 2.5h5l1-1.5h6v10.5H.5z" fill="#f5d57e" stroke="#dcb860" stroke-width=".8"/><rect x=".5" y="3.5" width="13" height="8" fill="#f7d886"/></svg>
<div class="t" style="left:84px;top:241px;font-size:11.5px;transform:scaleX(0.9210);transform-origin:0 0">scripts</div>
<div class="a" style="left:74px;top:264px;width:12px;border-top:1px dotted #999"></div>
<svg style="left:87px;top:257px" width="12" height="14" viewBox="0 0 12 14"><path d="M.5 .5h7l3.5 3.5v9.5H.5z" fill="#f8fbff" stroke="#7a8aa8" stroke-width="1"/><path d="M7.5 .5v3.5h3.5" fill="none" stroke="#7a8aa8"/></svg>
<div class="t" style="left:103px;top:257px;font-size:11.5px;transform:scaleX(0.9434);transform-origin:0 0">customconfig-surpac.jide</div>
<div class="a" style="left:74px;top:280px;width:12px;border-top:1px dotted #999"></div>
<svg style="left:87px;top:273px" width="12" height="14" viewBox="0 0 12 14"><path d="M.5 .5h7l3.5 3.5v9.5H.5z" fill="#f8fbff" stroke="#7a8aa8" stroke-width="1"/><path d="M7.5 .5v3.5h3.5" fill="none" stroke="#7a8aa8"/></svg>
<div class="t" style="left:103px;top:273px;font-size:11.5px;transform:scaleX(0.9525);transform-origin:0 0">defaultcustomconfig-surpac.</div>
<div class="a" style="left:74px;top:296px;width:12px;border-top:1px dotted #999"></div>
<svg style="left:86px;top:291px" width="14" height="10" viewBox="0 0 14 10"><rect x=".5" y=".5" width="13" height="9" fill="#5cc04c" stroke="#2a8a2a"/><path d="M6 2.5l3 2.5l-3 2.5z" fill="#c8f0c0"/></svg>
<div class="t" style="left:103px;top:289px;font-size:11.5px;transform:scaleX(0.9452);transform-origin:0 0">obsolete_customconfig-surpa</div>
<svg style="left:32px;top:308px" width="9" height="9" viewBox="0 0 9 9"><rect x=".5" y=".5" width="8" height="8" fill="#fff" stroke="#8a9aaa"/><path d="M2 4.5h5" stroke="#333" stroke-width="1"/><path d="M4.5 2v5" stroke="#333" stroke-width="1"/></svg>
<div class="a" style="left:41px;top:312px;width:4px;border-top:1px dotted #999"></div>
<svg style="left:46px;top:306px" width="14" height="12" viewBox="0 0 14 12"><path d="M.5 2.5h5l1-1.5h6v10.5H.5z" fill="#f5d57e" stroke="#dcb860" stroke-width=".8"/><rect x=".5" y="3.5" width="13" height="8" fill="#f7d886"/></svg>
<div class="t" style="left:65px;top:305px;font-size:11.5px;transform:scaleX(0.9399);transform-origin:0 0">road_design</div>
<svg style="left:32px;top:324px" width="9" height="9" viewBox="0 0 9 9"><rect x=".5" y=".5" width="8" height="8" fill="#fff" stroke="#8a9aaa"/><path d="M2 4.5h5" stroke="#333" stroke-width="1"/><path d="M4.5 2v5" stroke="#333" stroke-width="1"/></svg>
<div class="a" style="left:41px;top:328px;width:4px;border-top:1px dotted #999"></div>
<svg style="left:46px;top:322px" width="14" height="12" viewBox="0 0 14 12"><path d="M.5 2.5h5l1-1.5h6v10.5H.5z" fill="#f5d57e" stroke="#dcb860" stroke-width=".8"/><rect x=".5" y="3.5" width="13" height="8" fill="#f7d886"/></svg>
<div class="t" style="left:65px;top:321px;font-size:11.5px;transform:scaleX(0.9532);transform-origin:0 0">shared_tutorials</div>
<svg style="left:32px;top:340px" width="9" height="9" viewBox="0 0 9 9"><rect x=".5" y=".5" width="8" height="8" fill="#fff" stroke="#8a9aaa"/><path d="M2 4.5h5" stroke="#333" stroke-width="1"/><path d="M4.5 2v5" stroke="#333" stroke-width="1"/></svg>
<div class="a" style="left:41px;top:344px;width:4px;border-top:1px dotted #999"></div>
<svg style="left:46px;top:338px" width="14" height="12" viewBox="0 0 14 12"><path d="M.5 2.5h5l1-1.5h6v10.5H.5z" fill="#f5d57e" stroke="#dcb860" stroke-width=".8"/><rect x=".5" y="3.5" width="13" height="8" fill="#f7d886"/></svg>
<div class="t" style="left:65px;top:337px;font-size:11.5px;transform:scaleX(0.8843);transform-origin:0 0">solids</div>
<svg style="left:32px;top:356px" width="9" height="9" viewBox="0 0 9 9"><rect x=".5" y=".5" width="8" height="8" fill="#fff" stroke="#8a9aaa"/><path d="M2 4.5h5" stroke="#333" stroke-width="1"/><path d="M4.5 2v5" stroke="#333" stroke-width="1"/></svg>
<div class="a" style="left:41px;top:360px;width:4px;border-top:1px dotted #999"></div>
<svg style="left:46px;top:354px" width="14" height="12" viewBox="0 0 14 12"><path d="M.5 2.5h5l1-1.5h6v10.5H.5z" fill="#f5d57e" stroke="#dcb860" stroke-width=".8"/><rect x=".5" y="3.5" width="13" height="8" fill="#f7d886"/></svg>
<div class="t" style="left:65px;top:353px;font-size:11.5px;transform:scaleX(0.9736);transform-origin:0 0">ssilm</div>
<svg style="left:32px;top:372px" width="9" height="9" viewBox="0 0 9 9"><rect x=".5" y=".5" width="8" height="8" fill="#fff" stroke="#8a9aaa"/><path d="M2 4.5h5" stroke="#333" stroke-width="1"/><path d="M4.5 2v5" stroke="#333" stroke-width="1"/></svg>
<div class="a" style="left:41px;top:376px;width:4px;border-top:1px dotted #999"></div>
<svg style="left:46px;top:370px" width="14" height="12" viewBox="0 0 14 12"><path d="M.5 2.5h5l1-1.5h6v10.5H.5z" fill="#f5d57e" stroke="#dcb860" stroke-width=".8"/><rect x=".5" y="3.5" width="13" height="8" fill="#f7d886"/></svg>
<div class="t" style="left:65px;top:369px;font-size:11.5px;transform:scaleX(0.9309);transform-origin:0 0">streaming_files</div>
<svg style="left:32px;top:388px" width="9" height="9" viewBox="0 0 9 9"><rect x=".5" y=".5" width="8" height="8" fill="#fff" stroke="#8a9aaa"/><path d="M2 4.5h5" stroke="#333" stroke-width="1"/><path d="M4.5 2v5" stroke="#333" stroke-width="1"/></svg>
<div class="a" style="left:41px;top:392px;width:4px;border-top:1px dotted #999"></div>
<svg style="left:46px;top:386px" width="14" height="12" viewBox="0 0 14 12"><path d="M.5 2.5h5l1-1.5h6v10.5H.5z" fill="#f5d57e" stroke="#dcb860" stroke-width=".8"/><rect x=".5" y="3.5" width="13" height="8" fill="#f7d886"/></svg>
<div class="t" style="left:65px;top:385px;font-size:11.5px;transform:scaleX(0.9671);transform-origin:0 0">surveying</div>
<div class="a" style="left:55px;top:239px;width:1px;height:5px;border-left:1px dotted #999"></div>
<div class="a" style="left:74px;top:256px;width:1px;height:41px;border-left:1px dotted #999"></div>
<div class="a" style="left:242px;top:192px;width:16px;height:205px;background:#fff"></div>
<div class="a" style="left:243px;top:292px;width:15px;height:8px;background:#cdcdcd"></div>
<svg style="left:245px;top:196px" width="9" height="6" viewBox="0 0 9 6"><path d="M.5 5l4-4l4 4" fill="none" stroke="#555" stroke-width="1.3"/></svg>
<svg style="left:245px;top:384px" width="9" height="6" viewBox="0 0 9 6"><path d="M.5 1l4 4l4-4" fill="none" stroke="#555" stroke-width="1.3"/></svg>
<div class="a" style="left:2px;top:397px;width:240px;height:16px;background:#f0f0f0"></div>
<div class="a" style="left:45px;top:397px;width:88px;height:16px;background:#cdcdcd"></div>
<svg style="left:7px;top:400px" width="6" height="9" viewBox="0 0 6 9"><path d="M5 .5l-4 4l4 4" fill="none" stroke="#555" stroke-width="1.3"/></svg>
<svg style="left:230px;top:400px" width="6" height="9" viewBox="0 0 6 9"><path d="M1 .5l4 4l-4 4" fill="none" stroke="#555" stroke-width="1.3"/></svg>
<div class="a" style="left:242px;top:397px;width:16px;height:16px;background:#f0f0f0"></div>
<div class="a" style="left:0px;top:414px;width:259px;height:24px;background:linear-gradient(#fdfdfd,#f6f6f6)"></div>
<svg style="left:4px;top:413px" width="107" height="21" viewBox="0 0 107 21"><path d="M0.5 0.5L20 19.5H102V0.5" fill="#fff" stroke="#9a9a9a"/></svg>
<svg style="left:106px;top:413px" width="70" height="21" viewBox="0 0 70 21"><path d="M0.5 .5V17l3 2.5H67l2.5-2.5V.5" fill="#f4f4f4" stroke="#9a9a9a"/></svg>
<svg style="left:30px;top:416px" width="16" height="14" viewBox="0 0 16 14"><path d="M1 3h5l1-2h6v11H1z" fill="#f3d480" stroke="#b8902a"/><circle cx="9" cy="8" r="4" fill="#e8f0ff" stroke="#8a8a8a"/></svg>
<svg style="left:113px;top:416px" width="15" height="15" viewBox="0 0 15 15"><rect x=".5" y=".5" width="14" height="14" fill="#fff" stroke="#6a7a9a"/><path d="M3 4h1.5M6 4h6M3 7.5h1.5M6 7.5h6M3 11h1.5M6 11h6" stroke="#5a7a5a" stroke-width="1.5"/></svg>
<div class="t" style="left:50px;top:417px;font-size:11.5px;transform:scaleX(0.9509);transform-origin:0 0">Navigator</div>
<div class="t" style="left:133px;top:417px;font-size:11.5px;transform:scaleX(0.9303);transform-origin:0 0">Legend</div>
<div class="a" style="left:0px;top:438px;width:259px;height:23px;background:linear-gradient(#f7f7f7,#e6e6e6)"></div>
<div class="t" style="left:6px;top:442px;font-size:11.5px;color:#111;transform:scaleX(0.9253);transform-origin:0 0">Properties</div>
<svg style="left:196px;top:445px" width="11" height="10" viewBox="0 0 11 10"><rect x="1" y="4.5" width="5.5" height="5" fill="none" stroke="#111" stroke-width="1.4"/><path d="M3.5 3V.5h6.5v5.5H7" fill="none" stroke="#111" stroke-width="1.1"/></svg>
<svg style="left:218px;top:445px" width="9" height="10" viewBox="0 0 9 10"><path d="M2 .5h5v5.5H2zM0.5 6h8M4.5 6v4" fill="none" stroke="#111" stroke-width="1.2"/></svg>
<svg style="left:237px;top:445px" width="9" height="9" viewBox="0 0 9 9"><path d="M.5 .5l8 8M8.5 .5l-8 8" stroke="#111" stroke-width=".9"/></svg>
<div class="a" style="left:1px;top:461px;width:258px;height:64px;background:#efefef;border:1px solid #a0a0a0"></div>
<div class="a" style="left:1px;top:527px;width:258px;height:32px;background:#fff;border:1px solid #a0a0a0"></div>
<div class="t" style="left:2.7px;top:529px;font-size:11.5px;font-weight:bold;transform:scaleX(1.0620);transform-origin:0 0">(Name)</div>
<div class="t" style="left:2.7px;top:543px;font-size:11.5px;transform:scaleX(0.9297);transform-origin:0 0">(Description)</div>
<svg style="left:4px;top:559px" width="107" height="21" viewBox="0 0 107 21"><path d="M0.5 0.5L20 19.5H102V0.5" fill="#fff" stroke="#9a9a9a"/></svg>
<svg style="left:107px;top:559px" width="107" height="21" viewBox="0 0 107 21"><path d="M0.5 .5V17l3 2.5H104l2.5-2.5V.5" fill="#f4f4f4" stroke="#9a9a9a"/></svg>
<svg style="left:30px;top:562px" width="17" height="14" viewBox="0 0 17 14"><circle cx="5" cy="9" r="4" fill="#8aa0b8" stroke="#5a6a8a"/><circle cx="12" cy="5" r="3.5" fill="#9ab0c8" stroke="#5a6a8a"/><circle cx="5" cy="9" r="1.3" fill="#fff"/><circle cx="12" cy="5" r="1.2" fill="#fff"/></svg>
<svg style="left:113px;top:561px" width="17" height="16" viewBox="0 0 17 16"><path d="M2 14l11-11M14 14L4 4" stroke="#222" stroke-width="2.2"/><path d="M1 5l4-4l3 3l-4 4z" fill="#222"/><path d="M11 1l5 2l-3 3z" fill="#444"/></svg>
<div class="t" style="left:50px;top:563px;font-size:11.5px;transform:scaleX(0.9310);transform-origin:0 0">Properties</div>
<div class="t" style="left:133.6px;top:563px;font-size:11.5px;transform:scaleX(0.9479);transform-origin:0 0">Tool properties</div>
<div class="a" style="left:0px;top:583px;width:259px;height:26px;background:linear-gradient(#f7f7f7,#e6e6e6)"></div>
<div class="t" style="left:6px;top:589px;font-size:11.5px;color:#111;transform:scaleX(0.9184);transform-origin:0 0">Layers</div>
<div class="a" style="left:166px;top:586px;width:27px;height:20px;background:linear-gradient(#fafafa,#f0f0f0);border:1px solid #d0d0d0;border-bottom-color:#a8a8a8;border-right-color:#a8a8a8"></div>
<div class="t" style="left:168px;top:589px;font-size:11.5px;color:#111;transform:scaleX(0.9519);transform-origin:0 0">New</div>
<svg style="left:196px;top:591px" width="11" height="10" viewBox="0 0 11 10"><rect x="1" y="4.5" width="5.5" height="5" fill="none" stroke="#111" stroke-width="1.4"/><path d="M3.5 3V.5h6.5v5.5H7" fill="none" stroke="#111" stroke-width="1.1"/></svg>
<svg style="left:218px;top:591px" width="9" height="10" viewBox="0 0 9 10"><path d="M2 .5h5v5.5H2zM0.5 6h8M4.5 6v4" fill="none" stroke="#111" stroke-width="1.2"/></svg>
<svg style="left:237px;top:591px" width="9" height="9" viewBox="0 0 9 9"><path d="M.5 .5l8 8M8.5 .5l-8 8" stroke="#111" stroke-width=".9"/></svg>
<div class="a" style="left:1px;top:609px;width:258px;height:67px;background:#fff;border:1px solid #a0a0a0"></div>
<div class="a" style="left:56px;top:631px;width:185px;height:22px;background:#0a78d7"></div>
<svg style="left:21px;top:614px" width="16" height="12" viewBox="0 0 16 12"><rect x=".5" y=".5" width="15" height="11" fill="#f4f4f8" stroke="#8a9ab8"/><ellipse cx="8" cy="6" rx="5.5" ry="2.8" fill="#a8a0d8" stroke="#b07070" stroke-width=".6"/></svg>
<svg style="left:39px;top:612px" width="17" height="17" viewBox="0 0 17 17"><path d="M2.5 8V4a3.5 3.5 0 0 1 7 0v1" fill="none" stroke="#c8a030" stroke-width="2"/><rect x="6" y="7" width="10" height="9" fill="#f2d060" stroke="#b89020"/><path d="M11 10v3" stroke="#6a5010" stroke-width="1.2"/></svg>
<div class="t" style="left:67.6px;top:613px;font-size:11.5px;;transform:scaleX(0.9651);transform-origin:0 0">ore1.dtm</div>
<svg style="left:21px;top:636px" width="16" height="12" viewBox="0 0 16 12"><rect x=".5" y=".5" width="15" height="11" fill="#f4f4f8" stroke="#8a9ab8"/><ellipse cx="8" cy="6" rx="5.5" ry="2.8" fill="#e8a0a0" stroke="#b07070" stroke-width=".6"/></svg>
<svg style="left:39px;top:634px" width="17" height="17" viewBox="0 0 17 17"><path d="M2.5 8V4a3.5 3.5 0 0 1 7 0v1" fill="none" stroke="#c8a030" stroke-width="2"/><rect x="6" y="7" width="10" height="9" fill="#f2d060" stroke="#b89020"/><path d="M11 10v3" stroke="#6a5010" stroke-width="1.2"/></svg>
<div class="t" style="left:67.6px;top:635px;font-size:11.5px;color:#cfe6ff;transform:scaleX(0.9721);transform-origin:0 0">ore1.str</div>
<svg style="left:21px;top:658px" width="16" height="12" viewBox="0 0 16 12"><rect x=".5" y=".5" width="15" height="11" fill="#f4f4f8" stroke="#8a9ab8"/><ellipse cx="8" cy="6" rx="5.5" ry="2.8" fill="#e8a0a0" stroke="#b07070" stroke-width=".6"/></svg>
<svg style="left:39px;top:656px" width="17" height="17" viewBox="0 0 17 17"><path d="M2.5 8V4a3.5 3.5 0 0 1 7 0v1" fill="none" stroke="#c8a030" stroke-width="2"/><rect x="6" y="7" width="10" height="9" fill="#f2d060" stroke="#b89020"/><path d="M11 10v3" stroke="#6a5010" stroke-width="1.2"/></svg>
<div class="t" style="left:67.6px;top:657px;font-size:11.5px;font-weight:bold;font-style:italic;transform:scaleX(1.0577);transform-origin:0 0">pit1.dtm</div>
<svg style="left:3px;top:657px" width="16" height="13" viewBox="0 0 16 13"><rect x=".5" y=".5" width="15" height="12" fill="#f4f4f8" stroke="#8a9ab8"/><path d="M4 6.5l3 3l5-6" fill="none" stroke="#3a9a3a" stroke-width="2"/></svg>
<div class="a" style="left:242px;top:610px;width:16px;height:65px;background:#fff"></div>
<div class="a" style="left:243px;top:643px;width:15px;height:15px;background:#cdcdcd"></div>
<svg style="left:245px;top:616px" width="9" height="6" viewBox="0 0 9 6"><path d="M.5 5l4-4l4 4" fill="none" stroke="#555" stroke-width="1.3"/></svg>
<svg style="left:245px;top:664px" width="9" height="6" viewBox="0 0 9 6"><path d="M.5 1l4 4l4-4" fill="none" stroke="#555" stroke-width="1.3"/></svg>
<div class="a" style="left:259px;top:145px;width:4px;height:400px;background:#f0f0f0"></div>
<div class="a" style="left:263px;top:147px;width:844px;height:396px;background:#000;border:3px solid #3fa356;box-shadow:0 0 0 1px #d8f5dc"></div>
<svg style="left:0;top:0" width="1361" height="706" viewBox="0 0 1361 706">
<defs>
<linearGradient id="sg1" x1="0" y1="0" x2="1" y2="1"><stop offset="0" stop-color="#eead51"/><stop offset="1" stop-color="#cf8428"/></linearGradient>
<linearGradient id="sg2" x1="0" y1="0" x2="0.6" y2="1"><stop offset="0" stop-color="#fbc25f"/><stop offset="1" stop-color="#f4b14a"/></linearGradient>
<linearGradient id="sg3" x1="0" y1="0" x2="0.3" y2="1"><stop offset="0" stop-color="#fccf78"/><stop offset="1" stop-color="#f6ba59"/></linearGradient>
<linearGradient id="sg4" x1="0" y1="0" x2="1" y2="0"><stop offset="0" stop-color="#b66c17"/><stop offset="1" stop-color="#925510"/></linearGradient>
<clipPath id="cp0"><path d="M678 259L694 278L717 309L737 357L762 408L740 413L709 375L670 300L655 291Z"/></clipPath><clipPath id="cp1"><path d="M678 259L722 271L746 265L783 314L818 335L820 352L800 413L762 408L737 357L717 309L694 278Z"/></clipPath><clipPath id="cp2"><path d="M696 410L740 413L762 408L792 380L800 413L823 454L840 505L782 461L740 448Z"/></clipPath><clipPath id="cp3"><path d="M535 286L574 290L598 343L606 360L578 378L541 295Z"/></clipPath><clipPath id="cp4"><path d="M574 290L606 300L631 320L655 408L615 388L606 360L598 343Z"/></clipPath><clipPath id="cp5"><path d="M521 267L552 265L563 258L608 262L632 277L606 300L574 290L535 286Z"/></clipPath><clipPath id="cp6"><path d="M459 245L467 248L521 267L535 286L541 295L578 378L589 397L491 289L491 281Z"/></clipPath><clipPath id="cp7"><path d="M826 380L878 426L896 402L880 446L906 484L851 465Z"/></clipPath><clipPath id="cp8"><path d="M907 385L921 367L928 378L931 452L906 440L896 402Z"/></clipPath><clipPath id="cp9"><path d="M836 296L848 285L912 376L907 385L896 402L878 426L826 342Z"/></clipPath><clipPath id="cp10"><path d="M792 380L817 380L850 466L840 505L823 454L801 413Z"/></clipPath></defs>
<!-- base silhouette -->
<path d="M438 262L459 245L467 248L521 267L552 265L563 258L608 262L632 277L656 291L678 258L722 271L746 265L783 314L818 335L813 264L857 276L921 367L928 378L931 452L914 477L906 484L851 465L840 505L782 461L740 448L696 410L681 405L657 410L615 388L600 392L589 397L491 289L491 281L468 295Z" fill="#bd771b"/>
<!-- left tab -->
<path d="M438 262L459 245L491 280L468 294Z" fill="#af6616"/>
<path d="M445 258L459 247L480 268L462 280Z" fill="#b8701d"/>
<path d="M468 293L491 280L492 288L469 297Z" fill="#f4ba60"/>
<!-- ridge -->
<path d="M459 245L467 248L521 267L535 286L491 281Z" fill="#b86e19"/>
<path d="M467 249L521 267L536 287L520 285L495 265Z" fill="#e29a3a"/>
<path d="M491 281L535 286L541 295L578 378L589 397L491 289Z" fill="#a1590e"/>
<path d="M493 288L585 394L589 397L491 290Z" fill="#dc9436"/>
<path d="M476 262L565 352" stroke="#834c0a" stroke-width="1.3"/>
<path d="M484 270L572 368" stroke="#925710" stroke-width="1"/>
<path d="M500 283L575 380" stroke="#e4a147" stroke-width="2"/>
<path d="M470 255L540 300" stroke="#925510" stroke-width="1"/>
<!-- lobe 2 top face -->
<path d="M521 267L552 265L563 258L608 262L632 277L606 300L574 290L535 286Z" fill="#ba721d"/>
<path d="M563 258L608 262L620 272L590 282L560 270Z" fill="#af6916"/>
<path d="M536 278L574 270L598 290L574 291Z" fill="#d08428"/>
<!-- lobe 2 light face -->
<path d="M535 286L574 290L598 343L606 360L578 378L541 295Z" fill="url(#sg1)"/>
<path d="M545 298L572 293L588 322L556 328Z" fill="#f4b55c"/><path d="M542 310L585 300M548 330L594 326M556 345L598 338" stroke="#af6616" stroke-width="1.3"/>
<path d="M556 335L596 340L604 356L580 370Z" fill="#f0b155"/>
<path d="M548 315L590 318" stroke="#be7a27" stroke-width="1.5"/>
<path d="M560 352L600 348" stroke="#d0882f" stroke-width="1.5"/>
<!-- lobe 2 mid face -->
<path d="M574 290L606 300L631 320L655 408L615 388L606 360L598 343Z" fill="#bf7c29"/>
<path d="M600 345L640 345L648 378L612 372Z" fill="#dc993f"/>
<path d="M606 360L640 372L650 396L615 388Z" fill="#e2a147"/>
<path d="M578 378L606 360L615 388L600 392L589 397Z" fill="#a9631f"/>
<!-- dark band lobe 2 right -->
<path d="M606 300L632 277L662 330L681 404L657 410L631 320Z" fill="#ac6718"/>
<path d="M636 318L652 316L672 392L660 400Z" fill="#a05c0e"/>
<!-- valley -->
<path d="M632 277L656 291L672 302L709 375L690 382L662 330Z" fill="#92520c"/><path d="M648 300L700 360" stroke="#743f05" stroke-width="2"/><path d="M655 290L706 368" stroke="#be7c27" stroke-width="1.2"/>
<path d="M681 404L690 382L709 375L696 410Z" fill="#b67226"/>
<!-- lobe 3 bright face -->
<path d="M678 259L694 278L717 309L737 357L762 408L740 413L709 375L670 300L655 291Z" fill="url(#sg2)"/>
<path d="M660 295L700 288L712 326L683 330Z" fill="#fcca76"/>
<path d="M690 345L728 350L744 392L716 388Z" fill="#fdd183"/>
<path d="M668 296L714 322" stroke="#be7823" stroke-width="1.6"/>
<path d="M676 282L705 286" stroke="#af6d1a" stroke-width="1.6"/>
<path d="M690 340L730 345" stroke="#d68e2d" stroke-width="1.3"/>
<path d="M700 372L748 392" stroke="#d89337" stroke-width="1.3"/>
<!-- lobe 3 right face -->
<path d="M678 259L722 271L746 265L783 314L818 335L820 352L800 413L762 408L737 357L717 309L694 278Z" fill="#b97421"/>
<path d="M700 275L746 266L790 320L765 330L730 305Z" fill="#a46215"/>
<linearGradient id="sgd" x1="1" y1="0" x2="0" y2="1"><stop offset="0" stop-color="#683a02"/><stop offset="1" stop-color="#a05c0e"/></linearGradient><path d="M746 265L818 335L820 352L802 352L730 281L722 271Z" fill="url(#sgd)"/>
<path d="M735 325L792 330L805 382L775 395L755 360Z" fill="#d6933b"/>
<path d="M740 355L780 360" stroke="#a96516" stroke-width="1.5"/>
<path d="M750 380L800 372" stroke="#af6d1c" stroke-width="1.3"/>
<!-- lower-left band under lobe3 -->
<path d="M696 410L740 413L762 408L792 380L800 413L823 454L840 505L782 461L740 448Z" fill="#d4933e"/>
<path d="M705 418L760 432L790 448L760 440Z" fill="#f0b65c"/><path d="M740 420L798 410L808 432L770 436Z" fill="#f2b860"/><path d="M770 452L820 470L830 490L800 480Z" fill="#eeb258"/>
<path d="M730 430L790 425L800 445L770 447Z" fill="#f4bc65"/>
<path d="M712 422L780 452" stroke="#a0601c" stroke-width="1.5"/>
<path d="M745 412L800 420" stroke="#a7671f" stroke-width="1.3"/>
<!-- dark band to bottom point -->
<path d="M792 380L817 380L850 466L840 505L823 454L801 413Z" fill="#a05d0e"/>
<path d="M805 395L820 400L845 480L835 470Z" fill="#854c0a"/>
<!-- wedge between lobe3 and lobe4 -->
<path d="M818 338L826 380L878 426L850 409Z" fill="#743f05"/>
<path d="M817 352L818 338L850 409L826 380Z" fill="#925510"/>
<!-- lobe 4 -->
<path d="M813 264L836 296L826 342L818 338Z" fill="#eb972b"/>
<path d="M813 264L857 276L836 296Z" fill="#af6916"/>
<path d="M836 296L848 285L912 376L907 385Z" fill="#f0ab4f"/><path d="M857 276L921 367L912 376L848 285Z" fill="#9e5e11"/>

<path d="M836 296L907 385L896 402L878 426L826 342Z" fill="url(#sg3)"/>
<path d="M845 322L892 378L884 402L836 345Z" fill="#fdd78c"/>
<path d="M907 385L921 367L928 378L931 452L906 440L896 402Z" fill="#cc822b"/>
<path d="M896 402L931 452L914 477L880 446Z" fill="#f0b151"/>
<path d="M826 380L878 426L896 402L880 446L906 484L851 465Z" fill="#de9d45"/>
<path d="M845 430L900 470" stroke="#985f18" stroke-width="1.5"/>
<path d="M835 410L885 440" stroke="#e8a950" stroke-width="1.5"/>
<path d="M920 390L928 450" stroke="#925510" stroke-width="2"/>
<g clip-path="url(#cp0)"><path d="M785.1 342.7L643.2 309.3L644.1 305.4Z" fill="#e69c3e" opacity="0.8"/><path d="M781.9 353.2L653.8 322.5L654.4 320.1Z" fill="#fdcf7e" opacity="0.8"/><path d="M684.6 334.0L795.2 364.0L796.3 359.6Z" fill="#af6616" opacity="0.8"/><path d="M741.0 370.1L679.5 355.7L680.0 353.7Z" fill="#be7823" opacity="0.8"/><path d="M673.7 264.9L721.1 278.9L722.1 274.9Z" fill="#af6616" opacity="0.8"/><path d="M734.5 281.1L658.6 263.2L659.1 261.2Z" fill="#be7823" opacity="0.8"/><path d="M835.9 322.2L686.3 287.7L687.7 282.2Z" fill="#fdcf7e" opacity="0.8"/><path d="M726.2 285.5L673.4 275.1L674.7 269.9Z" fill="#af6616" opacity="0.8"/><path d="M700.7 290.9L653.5 281.6L654.7 276.8Z" fill="#e69c3e" opacity="0.8"/><path d="M612.1 386.7L759.0 425.3L759.9 421.7Z" fill="#be7823" opacity="0.8"/><path d="M696.1 272.1L775.7 293.7L776.5 290.5Z" fill="#be7823" opacity="0.8"/><path d="M696.4 378.7L625.5 362.3L626.1 359.9Z" fill="#be7823" opacity="0.8"/><path d="M756.1 342.0L691.0 327.9L692.1 323.8Z" fill="#e69c3e" opacity="0.8"/><path d="M628.5 290.5L776.6 328.5L777.1 326.6Z" fill="#fdcf7e" opacity="0.8"/><path d="M774.9 257.7L625.3 222.7L626.5 218.2Z" fill="#be7823" opacity="0.8"/><path d="M740.4 273.2L694.0 264.1L695.2 259.5Z" fill="#fdcf7e" opacity="0.8"/><path d="M755.6 263.3L643.9 236.4L644.4 234.4Z" fill="#fdcf7e" opacity="0.8"/><path d="M797.8 346.0L701.9 324.4L703.0 320.0Z" fill="#af6616" opacity="0.8"/><path d="M824.2 295.7L693.5 264.6L694.2 261.6Z" fill="#e69c3e" opacity="0.8"/><path d="M647.6 342.0L763.8 372.9L764.7 369.3Z" fill="#af6616" opacity="0.8"/><path d="M650.5 303.2L698.6 318.4L700.1 312.3Z" fill="#e69c3e" opacity="0.8"/><path d="M634.9 293.6L773.9 330.5L774.9 326.4Z" fill="#e69c3e" opacity="0.8"/></g><g clip-path="url(#cp1)"><path d="M742.4 444.7L820.3 385.5L817.3 381.7Z" fill="#e2a147" opacity="0.8"/><path d="M783.8 246.6L731.2 290.0L729.9 288.4Z" fill="#af6b1e" opacity="0.8"/><path d="M720.7 289.8L662.2 339.3L659.5 335.9Z" fill="#d48c37" opacity="0.8"/><path d="M675.2 300.0L740.7 250.9L737.5 246.8Z" fill="#e2a147" opacity="0.8"/><path d="M696.2 283.6L660.5 316.0L656.7 311.4Z" fill="#e2a147" opacity="0.8"/><path d="M726.9 233.8L685.2 268.6L683.8 266.8Z" fill="#af6b1e" opacity="0.8"/><path d="M738.4 453.1L822.1 389.5L818.8 385.4Z" fill="#e2a147" opacity="0.8"/><path d="M710.7 269.5L776.3 218.5L774.8 216.7Z" fill="#af6b1e" opacity="0.8"/><path d="M840.6 341.0L739.8 425.4L736.2 420.8Z" fill="#e2a147" opacity="0.8"/></g><g clip-path="url(#cp2)"><path d="M734.9 448.1L776.5 463.9L777.2 461.7Z" fill="#a05e17" opacity="0.8"/><path d="M722.8 504.5L832.2 544.8L833.5 541.3Z" fill="#be7c2b" opacity="0.8"/><path d="M820.5 440.6L727.5 410.4L728.9 406.3Z" fill="#be7c2b" opacity="0.8"/><path d="M736.3 437.5L798.2 461.8L799.8 457.0Z" fill="#f0b65c" opacity="0.8"/><path d="M701.7 436.1L827.2 481.9L828.4 478.5Z" fill="#a05e17" opacity="0.8"/><path d="M828.5 396.7L700.8 354.6L702.4 350.0Z" fill="#f0b65c" opacity="0.8"/><path d="M749.7 376.3L813.5 401.1L815.1 396.6Z" fill="#a05e17" opacity="0.8"/><path d="M823.8 428.4L752.5 404.8L753.4 402.3Z" fill="#f0b65c" opacity="0.8"/><path d="M738.4 492.1L690.5 478.6L692.6 472.7Z" fill="#a05e17" opacity="0.8"/><path d="M871.3 460.9L750.8 420.7L752.0 417.2Z" fill="#be7c2b" opacity="0.8"/><path d="M746.1 388.5L879.6 437.4L881.0 433.6Z" fill="#a05e17" opacity="0.8"/><path d="M849.1 417.8L743.2 382.4L744.3 379.4Z" fill="#f0b65c" opacity="0.8"/><path d="M692.3 456.9L745.3 477.6L746.7 473.8Z" fill="#a05e17" opacity="0.8"/><path d="M869.4 422.7L751.8 384.9L753.9 378.9Z" fill="#a05e17" opacity="0.8"/><path d="M839.0 478.6L720.4 440.4L722.5 434.6Z" fill="#be7c2b" opacity="0.8"/><path d="M682.3 459.3L790.1 499.8L791.9 494.8Z" fill="#be7c2b" opacity="0.8"/><path d="M737.9 360.7L810.8 388.9L812.4 384.1Z" fill="#be7c2b" opacity="0.8"/><path d="M779.6 525.0L657.2 484.9L658.9 480.1Z" fill="#a05e17" opacity="0.8"/><path d="M741.9 500.1L794.3 520.5L795.7 516.8Z" fill="#be7c2b" opacity="0.8"/><path d="M858.7 371.4L755.1 337.4L756.5 333.4Z" fill="#f0b65c" opacity="0.8"/></g><g clip-path="url(#cp3)"><path d="M521.7 349.8L595.4 341.5L594.6 336.0Z" fill="#d0862f" opacity="0.8"/><path d="M525.7 290.2L578.0 283.6L577.7 281.2Z" fill="#f0b155" opacity="0.8"/><path d="M524.3 364.9L610.0 355.0L609.2 349.3Z" fill="#f0b155" opacity="0.8"/><path d="M582.9 272.0L529.0 281.7L528.5 278.6Z" fill="#af6616" opacity="0.8"/><path d="M559.4 368.3L589.2 366.0L588.6 361.7Z" fill="#d0862f" opacity="0.8"/><path d="M516.8 293.5L577.4 287.0L576.6 281.9Z" fill="#d0862f" opacity="0.8"/><path d="M622.8 367.5L535.2 381.8L534.8 379.5Z" fill="#af6616" opacity="0.8"/><path d="M559.5 333.8L622.8 325.7L622.4 323.0Z" fill="#d0862f" opacity="0.8"/><path d="M588.5 329.6L537.3 340.1L536.5 334.5Z" fill="#d0862f" opacity="0.8"/><path d="M633.7 355.2L573.3 366.6L572.6 362.1Z" fill="#af6616" opacity="0.8"/><path d="M513.0 291.1L564.6 285.6L564.0 281.3Z" fill="#af6616" opacity="0.8"/><path d="M618.4 307.3L555.5 318.8L554.9 314.7Z" fill="#d0862f" opacity="0.8"/></g><g clip-path="url(#cp4)"><path d="M652.0 414.3L542.1 395.2L543.2 389.8Z" fill="#e09d43" opacity="0.8"/><path d="M552.1 328.3L621.4 345.0L622.5 339.5Z" fill="#e09d43" opacity="0.8"/><path d="M636.0 292.4L598.6 286.5L599.2 283.4Z" fill="#a05e13" opacity="0.8"/><path d="M559.0 283.8L616.2 297.8L617.2 292.8Z" fill="#a05e13" opacity="0.8"/><path d="M616.8 288.0L661.1 299.0L661.9 294.9Z" fill="#e09d43" opacity="0.8"/><path d="M614.5 373.7L650.7 383.4L651.6 378.7Z" fill="#a05e13" opacity="0.8"/><path d="M630.6 400.4L577.9 391.3L578.5 388.4Z" fill="#a05e13" opacity="0.8"/><path d="M573.1 371.1L680.6 394.3L681.3 391.0Z" fill="#e09d43" opacity="0.8"/><path d="M665.2 310.7L614.5 301.8L614.9 299.4Z" fill="#a05e13" opacity="0.8"/><path d="M650.8 292.4L580.2 281.4L581.4 275.4Z" fill="#a05e13" opacity="0.8"/><path d="M608.1 361.8L650.1 372.5L651.0 368.1Z" fill="#e09d43" opacity="0.8"/><path d="M534.6 396.3L609.7 414.0L610.8 408.8Z" fill="#a05e13" opacity="0.8"/></g><g clip-path="url(#cp5)"><path d="M588.6 274.7L496.3 267.8L496.8 263.2Z" fill="#d8933b" opacity="0.8"/><path d="M509.4 226.9L607.2 239.9L607.8 233.6Z" fill="#a05e13" opacity="0.8"/><path d="M610.3 230.3L571.0 227.6L571.3 225.2Z" fill="#d8933b" opacity="0.8"/><path d="M529.2 273.2L608.7 282.2L608.9 280.1Z" fill="#a05e13" opacity="0.8"/><path d="M529.9 228.6L620.0 239.5L620.4 235.7Z" fill="#a05e13" opacity="0.8"/><path d="M569.5 220.9L627.6 227.9L627.8 225.6Z" fill="#d8933b" opacity="0.8"/><path d="M553.8 232.2L613.1 240.9L613.6 235.5Z" fill="#d8933b" opacity="0.8"/><path d="M541.0 305.1L636.9 316.6L637.3 312.8Z" fill="#d8933b" opacity="0.8"/><path d="M635.2 307.8L542.7 300.5L543.0 296.7Z" fill="#a05e13" opacity="0.8"/><path d="M590.9 256.1L556.8 254.5L557.1 251.0Z" fill="#a05e13" opacity="0.8"/></g><g clip-path="url(#cp6)"><path d="M496.7 394.4L440.0 335.7L443.7 332.4Z" fill="#a76316" opacity="0.8"/><path d="M544.0 211.1L609.2 285.0L611.4 283.0Z" fill="#834c0a" opacity="0.8"/><path d="M462.4 366.2L385.7 285.8L389.6 282.3Z" fill="#dc9436" opacity="0.8"/><path d="M573.0 359.0L495.2 275.0L496.7 273.6Z" fill="#dc9436" opacity="0.8"/><path d="M433.9 314.7L498.6 390.6L503.3 386.4Z" fill="#a76316" opacity="0.8"/><path d="M531.3 203.3L606.5 289.3L609.8 286.3Z" fill="#a76316" opacity="0.8"/><path d="M585.8 248.5L626.4 296.2L629.5 293.5Z" fill="#834c0a" opacity="0.8"/><path d="M488.7 276.3L548.5 345.3L551.6 342.5Z" fill="#dc9436" opacity="0.8"/><path d="M472.1 273.3L521.4 331.1L525.0 327.9Z" fill="#a76316" opacity="0.8"/><path d="M528.5 353.2L493.9 319.1L497.9 315.5Z" fill="#a76316" opacity="0.8"/><path d="M610.4 305.7L549.6 243.3L554.0 239.3Z" fill="#a76316" opacity="0.8"/><path d="M548.5 353.0L493.0 295.9L497.0 292.2Z" fill="#834c0a" opacity="0.8"/><path d="M527.1 301.2L573.6 355.5L576.8 352.6Z" fill="#a76316" opacity="0.8"/><path d="M571.2 259.3L617.5 314.1L621.3 310.7Z" fill="#834c0a" opacity="0.8"/><path d="M524.1 291.9L488.1 255.5L491.3 252.6Z" fill="#834c0a" opacity="0.8"/><path d="M599.5 289.2L524.0 209.7L527.6 206.5Z" fill="#a76316" opacity="0.8"/></g><g clip-path="url(#cp7)"><path d="M907.7 487.6L811.7 447.8L814.3 442.1Z" fill="#985f18" opacity="0.8"/><path d="M955.2 418.1L873.7 384.0L875.7 379.7Z" fill="#f0b151" opacity="0.8"/><path d="M842.6 435.3L916.9 470.2L918.0 467.6Z" fill="#f0b151" opacity="0.8"/><path d="M827.7 371.1L919.9 415.9L922.4 410.4Z" fill="#985f18" opacity="0.8"/><path d="M869.2 365.0L898.9 379.6L899.8 377.7Z" fill="#985f18" opacity="0.8"/><path d="M907.9 391.1L833.6 360.1L835.4 356.1Z" fill="#f0b151" opacity="0.8"/><path d="M840.5 399.3L901.2 428.1L902.3 425.7Z" fill="#985f18" opacity="0.8"/><path d="M935.9 455.0L850.7 419.6L852.9 414.7Z" fill="#f0b151" opacity="0.8"/><path d="M929.3 426.1L875.4 404.5L877.4 400.1Z" fill="#f0b151" opacity="0.8"/><path d="M898.5 480.8L856.8 464.7L858.8 460.3Z" fill="#985f18" opacity="0.8"/><path d="M912.9 427.8L854.8 404.1L856.7 400.0Z" fill="#f0b151" opacity="0.8"/><path d="M813.3 444.7L854.9 466.2L856.9 461.7Z" fill="#985f18" opacity="0.8"/></g><g clip-path="url(#cp8)"><path d="M920.7 439.5L911.1 395.4L916.9 394.5Z" fill="#925510" opacity="0.8"/><path d="M893.4 416.7L886.1 385.0L891.2 384.2Z" fill="#e0983f" opacity="0.8"/><path d="M886.1 420.7L877.6 377.1L881.4 376.5Z" fill="#925510" opacity="0.8"/><path d="M873.2 352.4L880.7 417.8L885.2 417.2Z" fill="#925510" opacity="0.8"/><path d="M929.9 413.6L922.4 379.6L927.0 379.0Z" fill="#925510" opacity="0.8"/><path d="M888.5 406.2L893.7 448.2L895.8 447.9Z" fill="#925510" opacity="0.8"/></g><g clip-path="url(#cp9)"><path d="M854.5 354.5L915.7 441.8L920.1 438.5Z" fill="#e89e3e" opacity="0.8"/><path d="M878.2 312.1L921.7 373.6L924.3 371.7Z" fill="#e89e3e" opacity="0.8"/><path d="M951.9 348.9L916.1 305.0L920.4 301.9Z" fill="#f4ba60" opacity="0.8"/><path d="M881.7 432.5L801.8 327.5L804.6 325.5Z" fill="#fddd95" opacity="0.8"/><path d="M885.1 330.7L948.2 419.3L951.5 416.8Z" fill="#f4ba60" opacity="0.8"/><path d="M949.9 342.7L919.8 306.6L924.1 303.4Z" fill="#f4ba60" opacity="0.8"/><path d="M918.0 280.1L946.8 322.3L950.0 319.9Z" fill="#f4ba60" opacity="0.8"/><path d="M843.0 326.7L913.8 425.5L916.9 423.2Z" fill="#fddd95" opacity="0.8"/><path d="M920.7 352.5L856.2 269.6L860.2 266.6Z" fill="#fddd95" opacity="0.8"/><path d="M830.5 281.7L911.8 393.3L913.6 391.9Z" fill="#fddd95" opacity="0.8"/><path d="M920.8 369.1L839.2 264.0L844.0 260.4Z" fill="#fddd95" opacity="0.8"/><path d="M911.3 406.8L866.6 348.8L868.9 347.1Z" fill="#fddd95" opacity="0.8"/></g><g clip-path="url(#cp10)"><path d="M848.6 393.0L876.7 478.0L879.5 477.0Z" fill="#834c0a" opacity="0.8"/><path d="M824.7 400.8L862.0 514.4L866.5 512.9Z" fill="#b67226" opacity="0.8"/><path d="M840.3 482.5L797.9 369.0L802.6 367.4Z" fill="#834c0a" opacity="0.8"/><path d="M829.0 330.5L866.1 445.0L871.3 443.2Z" fill="#b67226" opacity="0.8"/><path d="M768.0 416.8L802.1 517.6L804.2 516.9Z" fill="#834c0a" opacity="0.8"/><path d="M764.9 443.9L788.8 517.0L791.7 516.0Z" fill="#b67226" opacity="0.8"/><path d="M849.7 360.7L869.9 423.2L872.8 422.2Z" fill="#834c0a" opacity="0.8"/><path d="M758.8 480.7L729.7 401.6L732.2 400.7Z" fill="#834c0a" opacity="0.8"/></g></svg>

<svg style="left:265px;top:465px" width="60" height="60" viewBox="0 0 60 60"><path d="M37.5 38L26 24" stroke="#a01c1c" stroke-width="3"/><path d="M37.5 38V27" stroke="#5858c0" stroke-width="2.6"/><path d="M35 29l2.5-7l2.5 7z" fill="#6a6ad0"/><path d="M37.5 38L22 47" stroke="#28a828" stroke-width="2.2"/><path d="M18 49l5-6l2 4z" fill="#38c038"/><text x="17.5" y="20" font-size="9" fill="#b03030" font-family="Liberation Sans">X</text><text x="35.5" y="19.5" font-size="10" fill="#8a8ae0" font-family="Liberation Sans">Z</text><text x="8" y="54" font-size="9" fill="#40b040" font-family="Liberation Sans">Y</text></svg>
<div class="a" style="left:262px;top:547px;width:845px;height:109px;background:#fff;border:1px solid #a0a0a0"></div>
<div class="a" style="left:263px;top:548px;width:828px;height:107px;overflow:hidden">
<div class="t" style="left:1.5px;top:-6.5px;font-size:11.5px;transform:scaleX(0.9103);transform-origin:0 0">Drawing commencing - Please wait</div>
<div class="t" style="left:1.5px;top:7.5px;font-size:11.5px;transform:scaleX(0.9039);transform-origin:0 0">Loading model blockmodel.mdl</div>
<div class="t" style="left:1.5px;top:21.5px;font-size:11.5px;transform:scaleX(0.9537);transform-origin:0 0">Processing ..\..\..\logiciels\surpac 651\surpac 651\surpac tutorials\block_modelling\ore1.dtm</div>
<div class="t" style="left:1.5px;top:35.5px;font-size:11.5px;transform:scaleX(0.9103);transform-origin:0 0">Drawing commencing - Please wait</div>
<div class="t" style="left:1.5px;top:49.5px;font-size:11.5px;transform:scaleX(0.9565);transform-origin:0 0">Processing ..\..\..\logiciels\surpac 651\surpac 651\surpac tutorials\block_modelling\ore1.str</div>
<div class="t" style="left:1.5px;top:63.5px;font-size:11.5px;transform:scaleX(0.9103);transform-origin:0 0">Drawing commencing - Please wait</div>
<div class="t" style="left:1.5px;top:77.5px;font-size:11.5px;transform:scaleX(0.9547);transform-origin:0 0">Processing ..\..\..\logiciels\surpac 651\surpac 651\surpac tutorials\block_modelling\pit1.dtm</div>
<div class="t" style="left:1.5px;top:91.5px;font-size:11.5px;transform:scaleX(0.9103);transform-origin:0 0">Drawing commencing - Please wait</div>
</div>
<div class="a" style="left:1091px;top:548px;width:15px;height:107px;background:#f0f0f0"></div>
<div class="a" style="left:1092px;top:611px;width:14px;height:28px;background:#cdcdcd"></div>
<svg style="left:1094px;top:553px" width="9" height="6" viewBox="0 0 9 6"><path d="M.5 5l4-4l4 4" fill="none" stroke="#555" stroke-width="1.3"/></svg>
<svg style="left:1094px;top:643px" width="9" height="6" viewBox="0 0 9 6"><path d="M.5 1l4 4l4-4" fill="none" stroke="#555" stroke-width="1.3"/></svg>
<div class="a" style="left:262px;top:656px;width:845px;height:20px;background:#fff;border:1px solid #a0a0a0;border-top:none"></div>
<div class="a" style="left:264px;top:659px;width:142px;height:14px;background:#0a78d7"></div>
<div class="t" style="left:264px;top:659px;font-size:11.5px;color:#d8ecff;transform:scaleX(0.8634);transform-origin:0 0">BM GRAPHICS DRAW (BMGD)</div>
<div class="a" style="left:1111px;top:147px;width:229px;height:527px;background:#f0f0f0"></div>
<div class="a" style="left:1111px;top:147px;width:229px;height:21px;background:linear-gradient(#f7f7f7,#e6e6e6)"></div>
<div class="t" style="left:1117px;top:150px;font-size:11.5px;color:#111;transform:scaleX(0.8731);transform-origin:0 0">Planes</div>
<svg style="left:1278px;top:152px" width="11" height="10" viewBox="0 0 11 10"><rect x="1" y="4.5" width="5.5" height="5" fill="none" stroke="#111" stroke-width="1.4"/><path d="M3.5 3V.5h6.5v5.5H7" fill="none" stroke="#111" stroke-width="1.1"/></svg>
<svg style="left:1299px;top:152px" width="9" height="10" viewBox="0 0 9 10"><path d="M2 .5h5v5.5H2zM0.5 6h8M4.5 6v4" fill="none" stroke="#111" stroke-width="1.2"/></svg>
<svg style="left:1318px;top:152px" width="9" height="9" viewBox="0 0 9 9"><path d="M.5 .5l8 8M8.5 .5l-8 8" stroke="#111" stroke-width=".9"/></svg>
<div class="a" style="left:1118px;top:175px;width:23px;height:22px;background:linear-gradient(#e8e8e8,#d8d8d8);border:1px solid #c4c4c4"></div>
<svg style="left:1118px;top:175px" width="23" height="22" viewBox="-2.5 -2.5 28 27"><path d="M3 4l5-2v18l-5 2zM9 4l5-2v18l-5 2zM15 4l5-2v18l-5 2z" fill="#8ab0e8" stroke="#3a6ac0"/><path d="M6 12l5-4v2h7v4h-7v2z" fill="#f0d040" stroke="#b09020" stroke-width=".8"/></svg>
<div class="a" style="left:1142px;top:175px;width:23px;height:22px;background:linear-gradient(#e8e8e8,#d8d8d8);border:1px solid #c4c4c4"></div>
<svg style="left:1142px;top:175px" width="23" height="22" viewBox="-2.5 -2.5 28 27"><path d="M3 4l5-2v18l-5 2zM9 4l5-2v18l-5 2zM15 4l5-2v18l-5 2z" fill="#8ab0e8" stroke="#3a6ac0"/><path d="M18 12l-5-4v2H6v4h7v2z" fill="#f0d040" stroke="#b09020" stroke-width=".8"/></svg>
<svg style="left:1166px;top:175px" width="23" height="22" viewBox="-2.5 -2.5 28 27"><rect x="6" y="2" width="14" height="13" fill="#fff" stroke="#3a4a70" stroke-width=".8"/><path d="M6 4.7h9M6 7.3h9M9 2v8M12 2v8" stroke="#3a4a70" stroke-width=".8"/><rect x="6" y="2" width="14" height="13" fill="none" stroke="#3a4a70"/><path d="M8.8 2v13M6 4.6h14" stroke="#3a4a70" stroke-width=".8"/><path d="M11.6 2v13M6 7.2h14" stroke="#3a4a70" stroke-width=".8"/><path d="M14.399999999999999 2v13M6 9.8h14" stroke="#3a4a70" stroke-width=".8"/><path d="M17.2 2v13M6 12.4h14" stroke="#3a4a70" stroke-width=".8"/><path d="M3 10 L3 21 L16 21" fill="none" stroke="#2a8a2a" stroke-width="1.1"/></svg>
<div class="a" style="left:1190px;top:175px;width:23px;height:22px;background:linear-gradient(#e8e8e8,#d8d8d8);border:1px solid #c4c4c4"></div>
<svg style="left:1190px;top:175px" width="23" height="22" viewBox="-2.5 -2.5 28 27"><path d="M3 4l5-2v18l-5 2zM9 4l5-2v18l-5 2zM15 4l5-2v18l-5 2z" fill="#8ab0e8" stroke="#3a6ac0"/><path d="M5.5 6v14M11.5 6v14M17.5 6v14" stroke="#fff" stroke-width=".8"/></svg>
<div class="a" style="left:1214px;top:175px;width:23px;height:22px;background:linear-gradient(#e8e8e8,#d8d8d8);border:1px solid #c4c4c4"></div>
<svg style="left:1214px;top:175px" width="23" height="22" viewBox="-2.5 -2.5 28 27"><path d="M3 4l5-2v18l-5 2zM9 4l5-2v18l-5 2zM15 4l5-2v18l-5 2z" fill="#8ab0e8" stroke="#3a6ac0"/><path d="M5.5 6v14M11.5 6v14M17.5 6v14" stroke="#fff" stroke-width=".8"/><rect x="12" y="1" width="10" height="9" fill="#e04040" stroke="#a02020" stroke-width=".8"/><path d="M14 3l6 5M20 3l-6 5" stroke="#fff" stroke-width="1.4"/></svg>
<div class="a" style="left:1237px;top:175px;width:23px;height:22px;background:linear-gradient(#fbcf98,#f4aa60);border:1px solid #e0a060"></div>
<svg style="left:1237px;top:175px" width="23" height="22" viewBox="-2.5 -2.5 28 27"><rect x="6" y="3" width="12" height="17" fill="#fff" stroke="#333" stroke-width="1"/><path d="M9 16V9l3-3l3 3v7z" fill="#f0b070" stroke="#a06030" stroke-width=".8"/></svg>
<div class="a" style="left:1261px;top:175px;width:23px;height:22px;background:linear-gradient(#fbcf98,#f4aa60);border:1px solid #e0a060"></div>
<svg style="left:1261px;top:175px" width="23" height="22" viewBox="-2.5 -2.5 28 27"><rect x="6" y="3" width="12" height="17" fill="#fff" stroke="#333" stroke-width="1"/><rect x="8" y="6" width="8" height="10" fill="#5ab040"/><path d="M12 6v10M8 11h8" stroke="#fff" stroke-width=".8"/></svg>
<div class="a" style="left:1286px;top:175px;width:23px;height:22px;background:linear-gradient(#e8e8e8,#d8d8d8);border:1px solid #c4c4c4"></div>
<svg style="left:1286px;top:175px" width="23" height="22" viewBox="-2.5 -2.5 28 27"><rect x="6" y="3" width="12" height="17" fill="#fff" stroke="#3a5a7a" stroke-width="1"/><rect x="8.5" y="7" width="3" height="3" fill="none" stroke="#5a9a3a"/><rect x="12.5" y="7" width="3" height="3" fill="none" stroke="#5a9a3a"/><rect x="8.5" y="11" width="3" height="3" fill="none" stroke="#5a9a3a"/><rect x="12.5" y="11" width="3" height="3" fill="none" stroke="#5a9a3a"/></svg>
<svg style="left:1309px;top:175px" width="23" height="22" viewBox="-2.5 -2.5 28 27"><path d="M3 4l5-2v18l-5 2zM9 6l5-2v18l-5 2z" fill="#8ab0e8" stroke="#3a6ac0"/><path d="M13 6.0h6v6h-6z" fill="#62b33c" stroke="#2d6a18" stroke-width=".6"/><path d="M13 6.0l3.0 -3.0h6l-3.0 3.0z" fill="#8fd060" stroke="#2d6a18" stroke-width=".6"/><path d="M19 6.0l3.0 -3.0v6l-3.0 3.0z" fill="#3f8f22" stroke="#2d6a18" stroke-width=".6"/><rect x="13" y="14" width="9" height="8" fill="#fff" stroke="#3a5ab8" stroke-width=".8"/><path d="M13 16.7h9M13 19.3h9M16 14v8M19 14v8" stroke="#3a5ab8" stroke-width=".8"/></svg>
<svg style="left:1117px;top:207px" width="17" height="17" viewBox="0 0 17 17"><path d="M8.5 1L16.5 16H.5z" fill="#222"/></svg>
<div class="a" style="left:1137px;top:207px;width:47px;height:20px;background:#fff;border:1px solid #b8b8b8"></div>
<div class="t" style="left:1139.8px;top:210px;font-size:12.5px;transform:scaleX(0.8487);transform-origin:0 0">100000</div>
<svg style="left:1189px;top:208px" width="17" height="16" viewBox="0 0 17 16"><path d="M.5 1h16L8.5 15z" fill="#222"/></svg>
<div class="a" style="left:1209px;top:207px;width:47px;height:20px;background:#fff;border:1px solid #b8b8b8"></div>
<div class="t" style="left:1211.8px;top:210px;font-size:12.5px;transform:scaleX(0.8439);transform-origin:0 0">100000</div>
<svg style="left:1262px;top:207px" width="14" height="18" viewBox="0 0 14 18"><path d="M3 8V5a4 4 0 0 1 8 0v3" fill="none" stroke="#c8a030" stroke-width="2"/><rect x="1" y="8" width="12" height="9" fill="#f2d060" stroke="#b89020"/><path d="M7 11v3" stroke="#6a5010" stroke-width="1.4"/></svg>
<div class="a" style="left:1282px;top:206px;width:22px;height:21px;background:linear-gradient(#e8e8e8,#d8d8d8);border:1px solid #c4c4c4"></div>
<svg style="left:1282px;top:206px" width="22" height="21" viewBox="-2.5 -2.5 27 26"><path d="M8 4l3-2v14l-3 2z" fill="#8ab0e8" stroke="#3a6ac0"/><path d="M3 21l16-5" stroke="#333" stroke-width=".9"/><path d="M17 15l2 1l-2 2" fill="none" stroke="#333"/></svg>
<div class="a" style="left:1306px;top:206px;width:22px;height:21px;background:linear-gradient(#e8e8e8,#d8d8d8);border:1px solid #c4c4c4"></div>
<svg style="left:1306px;top:206px" width="22" height="21" viewBox="-2.5 -2.5 27 26"><path d="M3 8l5-3v14l-5 3z" fill="none" stroke="#7a8aa0"/><path d="M9 6l4-2v14l-4 2z" fill="#8ab0e8" stroke="#3a6ac0"/><path d="M13 6l5-3l4 4v10l-4 2" fill="#b8e8a8" stroke="#4a9a3a"/><path d="M3 21l16-5" stroke="#333" stroke-width=".9"/></svg>
<div class="a" style="left:1117px;top:233px;width:218px;height:436px;background:#fff;border:1px solid #a0a0a0"></div>
<svg style="left:1122px;top:237px" width="9" height="9" viewBox="0 0 9 9"><rect x=".5" y=".5" width="8" height="8" fill="#fff" stroke="#8a9aaa"/><path d="M2 4.5h5" stroke="#333" stroke-width="1"/><path d="M4.5 2v5" stroke="#333" stroke-width="1"/></svg>
<div class="a" style="left:1131px;top:241px;width:6px;border-top:1px dotted #999"></div>
<svg style="left:1138px;top:233px" width="12" height="16" viewBox="0 0 12 16"><path d="M3 15l-2-2L8 1l3 2z" fill="#8ab0e8" stroke="#3a6ac0"/></svg>
<svg style="left:1122px;top:253px" width="9" height="9" viewBox="0 0 9 9"><rect x=".5" y=".5" width="8" height="8" fill="#fff" stroke="#8a9aaa"/><path d="M2 4.5h5" stroke="#333" stroke-width="1"/><path d="M4.5 2v5" stroke="#333" stroke-width="1"/></svg>
<div class="a" style="left:1131px;top:257px;width:6px;border-top:1px dotted #999"></div>
<svg style="left:1137px;top:252px" width="16" height="10" viewBox="0 0 16 10"><path d="M1 5l7-4l7 4l-7 4z" fill="#8ab0e8" stroke="#3a6ac0"/></svg>
<svg style="left:1122px;top:269px" width="9" height="9" viewBox="0 0 9 9"><rect x=".5" y=".5" width="8" height="8" fill="#fff" stroke="#8a9aaa"/><path d="M2 4.5h5" stroke="#333" stroke-width="1"/><path d="M4.5 2v5" stroke="#333" stroke-width="1"/></svg>
<div class="a" style="left:1131px;top:273px;width:6px;border-top:1px dotted #999"></div>
<svg style="left:1139px;top:265px" width="10" height="16" viewBox="0 0 10 16"><path d="M2 2l6 2v11l-6-2z" fill="#8ab0e8" stroke="#3a6ac0"/></svg>
<div class="a" style="left:1126px;top:245px;width:1px;height:24px;border-left:1px dotted #999"></div>
<div class="a" style="left:1340px;top:145px;width:21px;height:535px;background:#f0f0f0"></div>
<svg style="left:1343px;top:147px" width="18" height="101" viewBox="0 0 18 101"><path d="M17.5 .5H4.5a4 4 0 0 0 -4 4V96.5a4 4 0 0 0 4 4H17.5" fill="#f8f8f8" stroke="#a8a8a8"/><path d="M3 3h11L3 14z" fill="#e04830"/><path d="M10 12l6 6M16 12l-6 6" stroke="#8a9aaa" stroke-width="1.5"/></svg>
<div class="t" style="left:1346px;top:173px;font-size:11.5px;writing-mode:vertical-rl;line-height:14px;transform:scaleY(0.8477);transform-origin:0 0">Solids Repair</div>
<div class="a" style="left:0px;top:679px;width:1361px;height:27px;background:#f0f0f0;border-top:1px solid #ababab"></div>
<svg style="left:2px;top:683px" width="16" height="19" viewBox="0 0 16 19"><path d="M1 1h4l3 7l3-7h4l-5 10v7H6v-7z" fill="#48b048" stroke="#2a8a2a" stroke-width=".6"/></svg>
<div class="t" style="left:20.3px;top:686px;font-size:11.5px;transform:scaleX(0.9590);transform-origin:0 0">7515.945</div>
<div class="a" style="left:115px;top:683px;width:1px;height:21px;background:#c0c0c0"></div>
<svg style="left:116px;top:683px" width="16" height="19" viewBox="0 0 16 19"><path d="M1 1h4l3 6l3-6h4l-5 8.5l5 8.5h-4l-3-6l-3 6H1l5-8.5z" fill="#e85040" stroke="#b03020" stroke-width=".6"/></svg>
<div class="t" style="left:134.8px;top:686px;font-size:11.5px;transform:scaleX(0.9382);transform-origin:0 0">1979.781</div>
<div class="a" style="left:229px;top:683px;width:1px;height:21px;background:#c0c0c0"></div>
<svg style="left:229px;top:683px" width="16" height="19" viewBox="0 0 16 19"><path d="M1 1h14v3L5 15h10v3H1v-3L11 4H1z" fill="#5a8ae0" stroke="#3060c0" stroke-width=".6"/></svg>
<div class="t" style="left:248px;top:686px;font-size:11.5px;transform:scaleX(0.9764);transform-origin:0 0">1107.299</div>
<div class="a" style="left:342px;top:684px;width:39px;height:19px;background:linear-gradient(#fafafa,#eaeaea);border:1px solid #909090;border-right:2px solid #555;border-bottom:2px solid #555"></div>
<div class="t" style="left:343px;top:687px;font-size:11.5px;transform:scaleX(0.9942);transform-origin:0 0">Str = 1</div>
<div class="a" style="left:381px;top:684px;width:62px;height:19px;background:linear-gradient(#fafafa,#eaeaea);border:1px solid #909090;border-right:2px solid #555;border-bottom:2px solid #555"></div>
<div class="t" style="left:382.5px;top:687px;font-size:11.5px;transform:scaleX(0.9316);transform-origin:0 0">0.000 angle</div>
<div class="t" style="left:449.7px;top:687px;font-size:11.5px;transform:scaleX(0.8775);transform-origin:0 0">3D</div>
<div class="a" style="left:470px;top:686px;width:1px;height:17px;background:#c0c0c0"></div>
<div class="t" style="left:477px;top:687px;font-size:11.5px;transform:scaleX(0.8472);transform-origin:0 0">Plan</div>
<div class="a" style="left:506px;top:686px;width:1px;height:17px;background:#c0c0c0"></div>
<div class="t" style="left:512px;top:687px;font-size:11.5px;transform:scaleX(0.8875);transform-origin:0 0">Dynamic</div>
<div class="a" style="left:561px;top:686px;width:1px;height:17px;background:#c0c0c0"></div>
<svg style="left:566px;top:685px" width="13" height="17" viewBox="0 0 13 17"><rect x="1" y="3" width="10" height="13" fill="#e8a040" stroke="#a06020"/><path d="M4 7v8M8 7v8" stroke="#6a4010" stroke-width="1.5"/><ellipse cx="6" cy="3" rx="5" ry="2" fill="#f0c070" stroke="#a06020"/></svg>
<div class="t" style="left:583px;top:687px;font-size:11.5px;transform:scaleX(0.8599);transform-origin:0 0">db1</div>
<svg style="left:610px;top:692px" width="8" height="5" viewBox="0 0 8 5"><path d="M0 0h7l-3.5 4z" fill="#111"/></svg>
<svg style="left:623px;top:685px" width="16" height="16" viewBox="0 0 16 16"><path d="M1 8.5h9v9h-9z" fill="#62b33c" stroke="#2d6a18" stroke-width=".6"/><path d="M1 8.5l4.5 -4.5h9l-4.5 4.5z" fill="#8fd060" stroke="#2d6a18" stroke-width=".6"/><path d="M10 8.5l4.5 -4.5v9l-4.5 4.5z" fill="#3f8f22" stroke="#2d6a18" stroke-width=".6"/></svg>
<div class="t" style="left:641.5px;top:687px;font-size:11.5px;transform:scaleX(0.8905);transform-origin:0 0">blockmodel</div>
<svg style="left:703px;top:692px" width="8" height="5" viewBox="0 0 8 5"><path d="M0 0h7l-3.5 4z" fill="#111"/></svg>
<div class="t" style="left:1000px;top:629px;font-size:20px;line-height:22px;color:rgba(120,120,120,.42);transform:scaleX(0.9918);transform-origin:0 0">Activer Windows</div>
<div class="t" style="left:1000px;top:655px;font-size:14.5px;line-height:17px;color:rgba(120,120,120,.42);transform:scaleX(1.0161);transform-origin:0 0">Accédez aux paramètres pour activer Windows.</div>
</body></html>
